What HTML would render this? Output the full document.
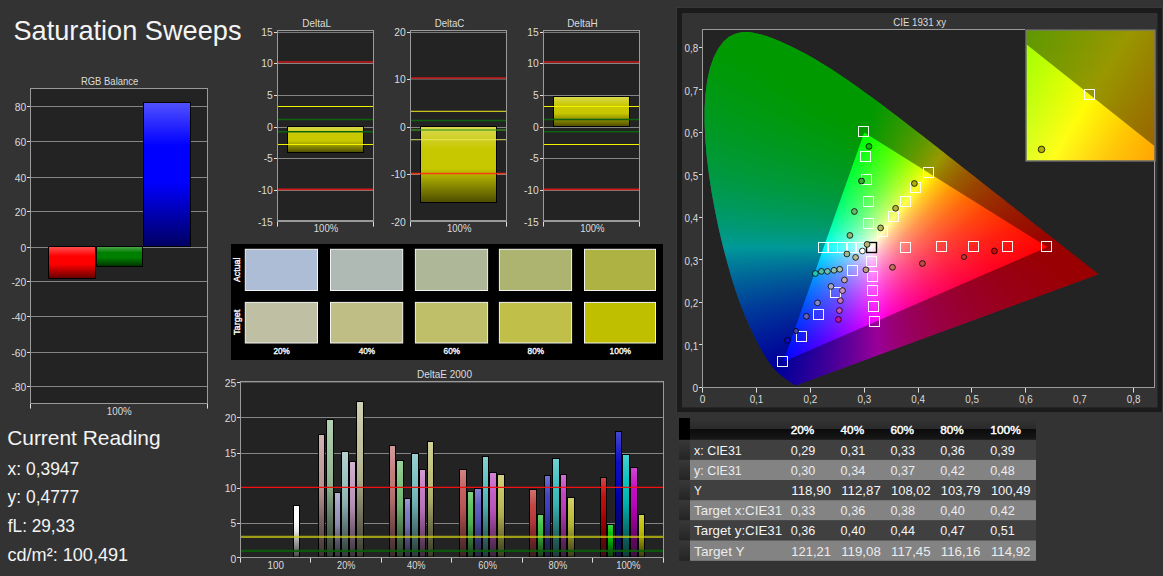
<!DOCTYPE html><html><head><meta charset="utf-8"><title>Saturation Sweeps</title><style>html,body{margin:0;padding:0;background:#333333;overflow:hidden}svg{display:block}text{white-space:pre}</style></head><body><svg width="1163" height="576" viewBox="0 0 1163 576" font-family='"Liberation Sans", sans-serif'><defs><linearGradient id="sh" x1="0" y1="0" x2="0" y2="1"><stop offset="0" stop-color="#fff" stop-opacity=".32"/><stop offset=".3" stop-color="#fff" stop-opacity="0"/><stop offset=".55" stop-color="#000" stop-opacity="0"/><stop offset="1" stop-color="#000" stop-opacity=".62"/></linearGradient><linearGradient id="sh2" x1="0" y1="0" x2="0" y2="1"><stop offset="0" stop-color="#fff" stop-opacity=".28"/><stop offset=".25" stop-color="#fff" stop-opacity=".05"/><stop offset=".5" stop-color="#000" stop-opacity=".1"/><stop offset="1" stop-color="#181818" stop-opacity=".8"/></linearGradient><linearGradient id="c0" gradientUnits="userSpaceOnUse" x1="733.0" x2="761.0" y1="0" y2="0"><stop offset="0" stop-color="#0f0"/><stop offset="1" stop-color="#0f0"/></linearGradient><linearGradient id="c1" gradientUnits="userSpaceOnUse" x1="729.0" x2="768.0" y1="0" y2="0"><stop offset="0" stop-color="#0f0"/><stop offset="1" stop-color="#0f0"/></linearGradient><linearGradient id="c2" gradientUnits="userSpaceOnUse" x1="726.0" x2="773.0" y1="0" y2="0"><stop offset="0" stop-color="#0f0"/><stop offset="1" stop-color="#0f0"/></linearGradient><linearGradient id="c3" gradientUnits="userSpaceOnUse" x1="724.0" x2="778.0" y1="0" y2="0"><stop offset="0" stop-color="#0f0"/><stop offset="1" stop-color="#0f0"/></linearGradient><linearGradient id="c4" gradientUnits="userSpaceOnUse" x1="722.0" x2="783.0" y1="0" y2="0"><stop offset="0" stop-color="#0f0"/><stop offset="1" stop-color="#0f0"/></linearGradient><linearGradient id="c5" gradientUnits="userSpaceOnUse" x1="720.0" x2="787.0" y1="0" y2="0"><stop offset="0" stop-color="#0f0"/><stop offset="1" stop-color="#0f0"/></linearGradient><linearGradient id="c6" gradientUnits="userSpaceOnUse" x1="719.0" x2="792.0" y1="0" y2="0"><stop offset="0" stop-color="#00ff02"/><stop offset="1" stop-color="#0f0"/></linearGradient><linearGradient id="c7" gradientUnits="userSpaceOnUse" x1="717.0" x2="796.0" y1="0" y2="0"><stop offset="0" stop-color="#00ff03"/><stop offset="0.5127" stop-color="#0f0"/><stop offset="1" stop-color="#0f0"/></linearGradient><linearGradient id="c8" gradientUnits="userSpaceOnUse" x1="716.0" x2="800.0" y1="0" y2="0"><stop offset="0" stop-color="#00ff05"/><stop offset="0.369" stop-color="#0f0"/><stop offset="1" stop-color="#0f0"/></linearGradient><linearGradient id="c9" gradientUnits="userSpaceOnUse" x1="715.0" x2="804.0" y1="0" y2="0"><stop offset="0" stop-color="#00ff06"/><stop offset="0.3596" stop-color="#0f0"/><stop offset="1" stop-color="#0f0"/></linearGradient><linearGradient id="c10" gradientUnits="userSpaceOnUse" x1="714.0" x2="807.0" y1="0" y2="0"><stop offset="0" stop-color="#00ff08"/><stop offset="0.3763" stop-color="#0f0"/><stop offset="1" stop-color="#0f0"/></linearGradient><linearGradient id="c11" gradientUnits="userSpaceOnUse" x1="713.0" x2="811.0" y1="0" y2="0"><stop offset="0" stop-color="#00ff09"/><stop offset="0.3878" stop-color="#0f0"/><stop offset="1" stop-color="#0f0"/></linearGradient><linearGradient id="c12" gradientUnits="userSpaceOnUse" x1="712.0" x2="814.0" y1="0" y2="0"><stop offset="0" stop-color="#00ff0a"/><stop offset="0.4069" stop-color="#0f0"/><stop offset="1" stop-color="#0f0"/></linearGradient><linearGradient id="c13" gradientUnits="userSpaceOnUse" x1="711.0" x2="818.0" y1="0" y2="0"><stop offset="0" stop-color="#00ff0c"/><stop offset="0.4252" stop-color="#0f0"/><stop offset="1" stop-color="#0f0"/></linearGradient><linearGradient id="c14" gradientUnits="userSpaceOnUse" x1="711.0" x2="821.0" y1="0" y2="0"><stop offset="0" stop-color="#00ff0d"/><stop offset="0.4364" stop-color="#0f0"/><stop offset="1" stop-color="#0f0"/></linearGradient><linearGradient id="c15" gradientUnits="userSpaceOnUse" x1="710.0" x2="825.0" y1="0" y2="0"><stop offset="0" stop-color="#00ff0e"/><stop offset="0.4522" stop-color="#0f0"/><stop offset="1" stop-color="#0f0"/></linearGradient><linearGradient id="c16" gradientUnits="userSpaceOnUse" x1="709.0" x2="828.0" y1="0" y2="0"><stop offset="0" stop-color="#00ff10"/><stop offset="0.4706" stop-color="#0f0"/><stop offset="1" stop-color="#0f0"/></linearGradient><linearGradient id="c17" gradientUnits="userSpaceOnUse" x1="708.0" x2="831.0" y1="0" y2="0"><stop offset="0" stop-color="#0f1"/><stop offset="0.4878" stop-color="#0f0"/><stop offset="1" stop-color="#0f0"/></linearGradient><linearGradient id="c18" gradientUnits="userSpaceOnUse" x1="708.0" x2="834.0" y1="0" y2="0"><stop offset="0" stop-color="#00ff12"/><stop offset="0.504" stop-color="#0f0"/><stop offset="1" stop-color="#0f0"/></linearGradient><linearGradient id="c19" gradientUnits="userSpaceOnUse" x1="708.0" x2="837.0" y1="0" y2="0"><stop offset="0" stop-color="#00ff14"/><stop offset="0.5155" stop-color="#0f0"/><stop offset="1" stop-color="#0f0"/></linearGradient><linearGradient id="c20" gradientUnits="userSpaceOnUse" x1="707.0" x2="840.0" y1="0" y2="0"><stop offset="0" stop-color="#00ff15"/><stop offset="0.5301" stop-color="#0f0"/><stop offset="1" stop-color="#0f0"/></linearGradient><linearGradient id="c21" gradientUnits="userSpaceOnUse" x1="707.0" x2="843.0" y1="0" y2="0"><stop offset="0" stop-color="#00ff16"/><stop offset="0.5404" stop-color="#0f0"/><stop offset="1" stop-color="#0f0"/></linearGradient><linearGradient id="c22" gradientUnits="userSpaceOnUse" x1="706.0" x2="846.0" y1="0" y2="0"><stop offset="0" stop-color="#00ff18"/><stop offset="0.5536" stop-color="#0f0"/><stop offset="1" stop-color="#0f0"/></linearGradient><linearGradient id="c23" gradientUnits="userSpaceOnUse" x1="706.0" x2="849.0" y1="0" y2="0"><stop offset="0" stop-color="#00ff19"/><stop offset="0.5629" stop-color="#0f0"/><stop offset="1" stop-color="#0f0"/></linearGradient><linearGradient id="c24" gradientUnits="userSpaceOnUse" x1="706.0" x2="852.0" y1="0" y2="0"><stop offset="0" stop-color="#00ff1b"/><stop offset="0.5719" stop-color="#0f0"/><stop offset="1" stop-color="#0f0"/></linearGradient><linearGradient id="c25" gradientUnits="userSpaceOnUse" x1="705.0" x2="855.0" y1="0" y2="0"><stop offset="0" stop-color="#00ff1c"/><stop offset="0.5867" stop-color="#0f0"/><stop offset="1" stop-color="#0f0"/></linearGradient><linearGradient id="c26" gradientUnits="userSpaceOnUse" x1="705.0" x2="858.0" y1="0" y2="0"><stop offset="0" stop-color="#00ff1d"/><stop offset="0.5948" stop-color="#0f0"/><stop offset="1" stop-color="#0f0"/></linearGradient><linearGradient id="c27" gradientUnits="userSpaceOnUse" x1="705.0" x2="860.0" y1="0" y2="0"><stop offset="0" stop-color="#00ff1f"/><stop offset="0.6065" stop-color="#0f0"/><stop offset="1" stop-color="#0f0"/></linearGradient><linearGradient id="c28" gradientUnits="userSpaceOnUse" x1="704.0" x2="863.0" y1="0" y2="0"><stop offset="0" stop-color="#00ff20"/><stop offset="0.6164" stop-color="#0f0"/><stop offset="1" stop-color="#0f0"/></linearGradient><linearGradient id="c29" gradientUnits="userSpaceOnUse" x1="704.0" x2="866.0" y1="0" y2="0"><stop offset="0" stop-color="#0f2"/><stop offset="0.6265" stop-color="#0f0"/><stop offset="1" stop-color="#0f0"/></linearGradient><linearGradient id="c30" gradientUnits="userSpaceOnUse" x1="704.0" x2="869.0" y1="0" y2="0"><stop offset="0" stop-color="#00ff23"/><stop offset="0.6333" stop-color="#0f0"/><stop offset="1" stop-color="#0f0"/></linearGradient><linearGradient id="c31" gradientUnits="userSpaceOnUse" x1="704.0" x2="871.0" y1="0" y2="0"><stop offset="0" stop-color="#00ff25"/><stop offset="0.6437" stop-color="#0f0"/><stop offset="1" stop-color="#0f0"/></linearGradient><linearGradient id="c32" gradientUnits="userSpaceOnUse" x1="704.0" x2="874.0" y1="0" y2="0"><stop offset="0" stop-color="#00ff26"/><stop offset="0.65" stop-color="#0f0"/><stop offset="1" stop-color="#0f0"/></linearGradient><linearGradient id="c33" gradientUnits="userSpaceOnUse" x1="704.0" x2="877.0" y1="0" y2="0"><stop offset="0" stop-color="#00ff27"/><stop offset="0.659" stop-color="#0f0"/><stop offset="1" stop-color="#02ff00"/></linearGradient><linearGradient id="c34" gradientUnits="userSpaceOnUse" x1="704.0" x2="880.0" y1="0" y2="0"><stop offset="0" stop-color="#00ff29"/><stop offset="0.6648" stop-color="#0f0"/><stop offset="0.9801" stop-color="#02ff00"/><stop offset="1" stop-color="#09ff00"/></linearGradient><linearGradient id="c35" gradientUnits="userSpaceOnUse" x1="703.0" x2="882.0" y1="0" y2="0"><stop offset="0" stop-color="#00ff2b"/><stop offset="0.676" stop-color="#0f0"/><stop offset="0.9637" stop-color="#02ff00"/><stop offset="1" stop-color="#0eff00"/></linearGradient><linearGradient id="c36" gradientUnits="userSpaceOnUse" x1="703.0" x2="885.0" y1="0" y2="0"><stop offset="0" stop-color="#00ff2c"/><stop offset="0.6841" stop-color="#0f0"/><stop offset="0.9451" stop-color="#02ff00"/><stop offset="1" stop-color="#16ff00"/></linearGradient><linearGradient id="c37" gradientUnits="userSpaceOnUse" x1="703.0" x2="888.0" y1="0" y2="0"><stop offset="0" stop-color="#00ff2e"/><stop offset="0.6892" stop-color="#0f0"/><stop offset="0.9243" stop-color="#02ff00"/><stop offset="1" stop-color="#1dff00"/></linearGradient><linearGradient id="c38" gradientUnits="userSpaceOnUse" x1="703.0" x2="890.0" y1="0" y2="0"><stop offset="0" stop-color="#00ff2f"/><stop offset="0.6979" stop-color="#0f0"/><stop offset="0.9118" stop-color="#02ff00"/><stop offset="1" stop-color="#23ff00"/></linearGradient><linearGradient id="c39" gradientUnits="userSpaceOnUse" x1="703.0" x2="893.0" y1="0" y2="0"><stop offset="0" stop-color="#00ff31"/><stop offset="0.6553" stop-color="#00ff01"/><stop offset="0.8947" stop-color="#02ff00"/><stop offset="1" stop-color="#2bff00"/></linearGradient><linearGradient id="c40" gradientUnits="userSpaceOnUse" x1="703.0" x2="896.0" y1="0" y2="0"><stop offset="0" stop-color="#00ff32"/><stop offset="0.6425" stop-color="#00ff03"/><stop offset="0.8679" stop-color="#0f0"/><stop offset="1" stop-color="#3f0"/></linearGradient><linearGradient id="c41" gradientUnits="userSpaceOnUse" x1="703.0" x2="898.0" y1="0" y2="0"><stop offset="0" stop-color="#00ff34"/><stop offset="0.6333" stop-color="#00ff05"/><stop offset="0.741" stop-color="#0f0"/><stop offset="0.8641" stop-color="#02ff00"/><stop offset="1" stop-color="#3aff00"/></linearGradient><linearGradient id="c42" gradientUnits="userSpaceOnUse" x1="703.0" x2="901.0" y1="0" y2="0"><stop offset="0" stop-color="#00ff36"/><stop offset="0.6212" stop-color="#00ff07"/><stop offset="0.7298" stop-color="#0f0"/><stop offset="0.846" stop-color="#02ff00"/><stop offset="1" stop-color="#42ff00"/></linearGradient><linearGradient id="c43" gradientUnits="userSpaceOnUse" x1="703.0" x2="903.0" y1="0" y2="0"><stop offset="0" stop-color="#00ff37"/><stop offset="0.6125" stop-color="#00ff08"/><stop offset="0.735" stop-color="#0f0"/><stop offset="0.835" stop-color="#02ff00"/><stop offset="1" stop-color="#49ff00"/></linearGradient><linearGradient id="c44" gradientUnits="userSpaceOnUse" x1="703.0" x2="906.0" y1="0" y2="0"><stop offset="0" stop-color="#00ff39"/><stop offset="0.601" stop-color="#00ff0a"/><stop offset="0.7365" stop-color="#0f0"/><stop offset="0.8202" stop-color="#03ff00"/><stop offset="1" stop-color="#53ff00"/></linearGradient><linearGradient id="c45" gradientUnits="userSpaceOnUse" x1="703.0" x2="909.0" y1="0" y2="0"><stop offset="0" stop-color="#00ff3b"/><stop offset="0.5898" stop-color="#00ff0c"/><stop offset="0.7403" stop-color="#0f0"/><stop offset="0.8034" stop-color="#02ff00"/><stop offset="1" stop-color="#5cff00"/></linearGradient><linearGradient id="c46" gradientUnits="userSpaceOnUse" x1="703.0" x2="911.0" y1="0" y2="0"><stop offset="0" stop-color="#00ff3c"/><stop offset="0.5841" stop-color="#00ff0e"/><stop offset="0.7476" stop-color="#0f0"/><stop offset="0.7933" stop-color="#02ff00"/><stop offset="1" stop-color="#64ff00"/></linearGradient><linearGradient id="c47" gradientUnits="userSpaceOnUse" x1="703.0" x2="914.0" y1="0" y2="0"><stop offset="0" stop-color="#00ff3e"/><stop offset="0.5735" stop-color="#00ff10"/><stop offset="0.7488" stop-color="#0f0"/><stop offset="0.7796" stop-color="#03ff00"/><stop offset="0.9858" stop-color="#67ff00"/><stop offset="1" stop-color="#6eff00"/></linearGradient><linearGradient id="c48" gradientUnits="userSpaceOnUse" x1="703.0" x2="916.0" y1="0" y2="0"><stop offset="0" stop-color="#00ff40"/><stop offset="0.5657" stop-color="#00ff12"/><stop offset="0.7559" stop-color="#0f0"/><stop offset="0.8028" stop-color="#12ff00"/><stop offset="1" stop-color="#76ff00"/></linearGradient><linearGradient id="c49" gradientUnits="userSpaceOnUse" x1="703.0" x2="919.0" y1="0" y2="0"><stop offset="0" stop-color="#00ff42"/><stop offset="0.5556" stop-color="#00ff14"/><stop offset="0.7523" stop-color="#02ff00"/><stop offset="0.9491" stop-color="#64ff00"/><stop offset="1" stop-color="#82ff00"/></linearGradient><linearGradient id="c50" gradientUnits="userSpaceOnUse" x1="703.0" x2="922.0" y1="0" y2="0"><stop offset="0" stop-color="#00ff43"/><stop offset="0.5457" stop-color="#00ff16"/><stop offset="0.7397" stop-color="#02ff00"/><stop offset="0.9315" stop-color="#65ff00"/><stop offset="1" stop-color="#8dff00"/></linearGradient><linearGradient id="c51" gradientUnits="userSpaceOnUse" x1="704.0" x2="924.0" y1="0" y2="0"><stop offset="0" stop-color="#00ff45"/><stop offset="0.5409" stop-color="#00ff18"/><stop offset="0.7273" stop-color="#02ff02"/><stop offset="0.9182" stop-color="#65ff00"/><stop offset="1" stop-color="#96ff00"/></linearGradient><linearGradient id="c52" gradientUnits="userSpaceOnUse" x1="704.0" x2="927.0" y1="0" y2="0"><stop offset="0" stop-color="#00ff47"/><stop offset="0.5314" stop-color="#00ff1a"/><stop offset="0.7152" stop-color="#02ff05"/><stop offset="0.7915" stop-color="#28ff00"/><stop offset="0.9664" stop-color="#8dff00"/><stop offset="1" stop-color="#a3ff00"/></linearGradient><linearGradient id="c53" gradientUnits="userSpaceOnUse" x1="704.0" x2="929.0" y1="0" y2="0"><stop offset="0" stop-color="#00ff49"/><stop offset="0.5244" stop-color="#00ff1c"/><stop offset="0.7067" stop-color="#03ff07"/><stop offset="0.7889" stop-color="#2dff00"/><stop offset="0.96" stop-color="#92ff00"/><stop offset="1" stop-color="#acff00"/></linearGradient><linearGradient id="c54" gradientUnits="userSpaceOnUse" x1="704.0" x2="932.0" y1="0" y2="0"><stop offset="0" stop-color="#00ff4b"/><stop offset="0.5154" stop-color="#00ff1e"/><stop offset="0.693" stop-color="#02ff09"/><stop offset="0.7873" stop-color="#34ff00"/><stop offset="0.9539" stop-color="#9aff00"/><stop offset="1" stop-color="#baff00"/></linearGradient><linearGradient id="c55" gradientUnits="userSpaceOnUse" x1="704.0" x2="934.0" y1="0" y2="0"><stop offset="0" stop-color="#00ff4d"/><stop offset="0.5109" stop-color="#00ff20"/><stop offset="0.6848" stop-color="#02ff0c"/><stop offset="0.7913" stop-color="#3cff00"/><stop offset="0.9522" stop-color="#a2ff00"/><stop offset="1" stop-color="#c4ff00"/></linearGradient><linearGradient id="c56" gradientUnits="userSpaceOnUse" x1="704.0" x2="937.0" y1="0" y2="0"><stop offset="0" stop-color="#00ff4f"/><stop offset="0.5021" stop-color="#00ff23"/><stop offset="0.6717" stop-color="#02ff0e"/><stop offset="0.794" stop-color="#46ff00"/><stop offset="0.9485" stop-color="#acff00"/><stop offset="1" stop-color="#d3ff00"/></linearGradient><linearGradient id="c57" gradientUnits="userSpaceOnUse" x1="704.0" x2="939.0" y1="0" y2="0"><stop offset="0" stop-color="#00ff51"/><stop offset="0.4957" stop-color="#00ff25"/><stop offset="0.6638" stop-color="#02ff11"/><stop offset="0.8" stop-color="#51ff00"/><stop offset="0.9489" stop-color="#b7ff00"/><stop offset="1" stop-color="#dfff00"/></linearGradient><linearGradient id="c58" gradientUnits="userSpaceOnUse" x1="705.0" x2="942.0" y1="0" y2="0"><stop offset="0" stop-color="#00ff53"/><stop offset="0.4895" stop-color="#00ff27"/><stop offset="0.6498" stop-color="#02ff13"/><stop offset="0.8017" stop-color="#5bff00"/><stop offset="0.9473" stop-color="#c3ff00"/><stop offset="1" stop-color="#ef0"/></linearGradient><linearGradient id="c59" gradientUnits="userSpaceOnUse" x1="705.0" x2="945.0" y1="0" y2="0"><stop offset="0" stop-color="#0f5"/><stop offset="0.4813" stop-color="#00ff29"/><stop offset="0.6396" stop-color="#02ff16"/><stop offset="0.8021" stop-color="#65ff00"/><stop offset="0.9417" stop-color="#cdff00"/><stop offset="1" stop-color="#ff0"/></linearGradient><linearGradient id="c60" gradientUnits="userSpaceOnUse" x1="705.0" x2="947.0" y1="0" y2="0"><stop offset="0" stop-color="#00ff57"/><stop offset="0.4773" stop-color="#00ff2c"/><stop offset="0.6322" stop-color="#03ff18"/><stop offset="0.7913" stop-color="#6f0"/><stop offset="0.9277" stop-color="#cdff00"/><stop offset="0.9876" stop-color="#fffd00"/><stop offset="1" stop-color="#fff300"/></linearGradient><linearGradient id="c61" gradientUnits="userSpaceOnUse" x1="705.0" x2="950.0" y1="0" y2="0"><stop offset="0" stop-color="#00ff59"/><stop offset="0.4694" stop-color="#00ff2e"/><stop offset="0.6204" stop-color="#02ff1b"/><stop offset="0.7755" stop-color="#64ff04"/><stop offset="0.8469" stop-color="#9f0"/><stop offset="0.9694" stop-color="#fffd00"/><stop offset="1" stop-color="#ffe300"/></linearGradient><linearGradient id="c62" gradientUnits="userSpaceOnUse" x1="705.0" x2="952.0" y1="0" y2="0"><stop offset="0" stop-color="#00ff5b"/><stop offset="0.4636" stop-color="#00ff31"/><stop offset="0.6134" stop-color="#02ff1e"/><stop offset="0.7672" stop-color="#66ff06"/><stop offset="0.8259" stop-color="#92ff00"/><stop offset="0.9494" stop-color="#fbff00"/><stop offset="0.9595" stop-color="#fff900"/><stop offset="1" stop-color="#ffd800"/></linearGradient><linearGradient id="c63" gradientUnits="userSpaceOnUse" x1="705.0" x2="955.0" y1="0" y2="0"><stop offset="0" stop-color="#00ff5d"/><stop offset="0.458" stop-color="#0f3"/><stop offset="0.602" stop-color="#02ff21"/><stop offset="0.752" stop-color="#65ff0a"/><stop offset="0.824" stop-color="#9cff00"/><stop offset="0.938" stop-color="#fffd00"/><stop offset="1" stop-color="#ffcb00"/></linearGradient><linearGradient id="c64" gradientUnits="userSpaceOnUse" x1="706.0" x2="957.0" y1="0" y2="0"><stop offset="0" stop-color="#00ff5f"/><stop offset="0.4542" stop-color="#00ff35"/><stop offset="0.5936" stop-color="#02ff23"/><stop offset="0.741" stop-color="#65ff0d"/><stop offset="0.8287" stop-color="#af0"/><stop offset="0.9243" stop-color="#fffd00"/><stop offset="0.992" stop-color="#ffc700"/><stop offset="1" stop-color="#ffc100"/></linearGradient><linearGradient id="c65" gradientUnits="userSpaceOnUse" x1="706.0" x2="960.0" y1="0" y2="0"><stop offset="0" stop-color="#00ff62"/><stop offset="0.4469" stop-color="#00ff38"/><stop offset="0.5827" stop-color="#01ff27"/><stop offset="0.7264" stop-color="#64ff10"/><stop offset="0.8307" stop-color="#b9ff00"/><stop offset="0.9075" stop-color="#fffd00"/><stop offset="0.9724" stop-color="#ffc700"/><stop offset="1" stop-color="#ffb600"/></linearGradient><linearGradient id="c66" gradientUnits="userSpaceOnUse" x1="706.0" x2="962.0" y1="0" y2="0"><stop offset="0" stop-color="#00ff64"/><stop offset="0.4434" stop-color="#00ff3b"/><stop offset="0.5762" stop-color="#02ff29"/><stop offset="0.7188" stop-color="#66ff13"/><stop offset="0.8359" stop-color="#c9ff00"/><stop offset="0.8945" stop-color="#fffc00"/><stop offset="0.959" stop-color="#ffc700"/><stop offset="1" stop-color="#ffad00"/></linearGradient><linearGradient id="c67" gradientUnits="userSpaceOnUse" x1="706.0" x2="965.0" y1="0" y2="0"><stop offset="0" stop-color="#00ff67"/><stop offset="0.4363" stop-color="#00ff3d"/><stop offset="0.5676" stop-color="#03ff2c"/><stop offset="0.7066" stop-color="#66ff16"/><stop offset="0.8263" stop-color="#ceff00"/><stop offset="0.8784" stop-color="#fffc00"/><stop offset="0.9421" stop-color="#ffc600"/><stop offset="1" stop-color="#ffa300"/></linearGradient><linearGradient id="c68" gradientUnits="userSpaceOnUse" x1="707.0" x2="967.0" y1="0" y2="0"><stop offset="0" stop-color="#00ff69"/><stop offset="0.4327" stop-color="#00ff40"/><stop offset="0.5577" stop-color="#02ff30"/><stop offset="0.6942" stop-color="#65ff1a"/><stop offset="0.8115" stop-color="#ccff04"/><stop offset="0.8635" stop-color="#fffe00"/><stop offset="0.925" stop-color="#ffc800"/><stop offset="1" stop-color="#ff9b00"/></linearGradient><linearGradient id="c69" gradientUnits="userSpaceOnUse" x1="707.0" x2="970.0" y1="0" y2="0"><stop offset="0" stop-color="#00ff6b"/><stop offset="0.4278" stop-color="#00ff43"/><stop offset="0.5494" stop-color="#02ff33"/><stop offset="0.6825" stop-color="#65ff1e"/><stop offset="0.7985" stop-color="#cdff07"/><stop offset="0.8479" stop-color="#fffe00"/><stop offset="0.9087" stop-color="#ffc800"/><stop offset="0.9886" stop-color="#ff9700"/><stop offset="1" stop-color="#ff9200"/></linearGradient><linearGradient id="c70" gradientUnits="userSpaceOnUse" x1="707.0" x2="973.0" y1="0" y2="0"><stop offset="0" stop-color="#00ff6e"/><stop offset="0.4211" stop-color="#00ff46"/><stop offset="0.5395" stop-color="#02ff36"/><stop offset="0.6711" stop-color="#65ff21"/><stop offset="0.7838" stop-color="#cdff0b"/><stop offset="0.8327" stop-color="#fffe00"/><stop offset="0.891" stop-color="#ffc900"/><stop offset="0.9699" stop-color="#ff9800"/><stop offset="1" stop-color="#ff8900"/></linearGradient><linearGradient id="c71" gradientUnits="userSpaceOnUse" x1="707.0" x2="975.0" y1="0" y2="0"><stop offset="0" stop-color="#00ff70"/><stop offset="0.4179" stop-color="#00ff49"/><stop offset="0.5336" stop-color="#02ff39"/><stop offset="0.6623" stop-color="#65ff25"/><stop offset="0.7724" stop-color="#ccff0f"/><stop offset="0.8209" stop-color="#fffe05"/><stop offset="0.8657" stop-color="#ffd300"/><stop offset="0.9384" stop-color="#ffa100"/><stop offset="1" stop-color="#ff8300"/></linearGradient><linearGradient id="c72" gradientUnits="userSpaceOnUse" x1="708.0" x2="978.0" y1="0" y2="0"><stop offset="0" stop-color="#00ff73"/><stop offset="0.413" stop-color="#00ff4b"/><stop offset="0.5222" stop-color="#01ff3d"/><stop offset="0.6481" stop-color="#64ff29"/><stop offset="0.7574" stop-color="#ccff14"/><stop offset="0.8056" stop-color="#fffe09"/><stop offset="0.8556" stop-color="#ffcd00"/><stop offset="0.9296" stop-color="#ff9c00"/><stop offset="1" stop-color="#ff7b00"/></linearGradient><linearGradient id="c73" gradientUnits="userSpaceOnUse" x1="708.0" x2="980.0" y1="0" y2="0"><stop offset="0" stop-color="#00ff75"/><stop offset="0.4099" stop-color="#00ff4e"/><stop offset="0.5165" stop-color="#02ff40"/><stop offset="0.6397" stop-color="#64ff2c"/><stop offset="0.7463" stop-color="#cbff18"/><stop offset="0.7941" stop-color="#fffd0d"/><stop offset="0.8493" stop-color="#ffc800"/><stop offset="0.9246" stop-color="#ff9700"/><stop offset="1" stop-color="#ff7500"/></linearGradient><linearGradient id="c74" gradientUnits="userSpaceOnUse" x1="708.0" x2="983.0" y1="0" y2="0"><stop offset="0" stop-color="#00ff78"/><stop offset="0.4055" stop-color="#00ff51"/><stop offset="0.5091" stop-color="#03ff43"/><stop offset="0.6309" stop-color="#66ff30"/><stop offset="0.7345" stop-color="#cdff1c"/><stop offset="0.78" stop-color="#fffd11"/><stop offset="0.8345" stop-color="#ffc803"/><stop offset="0.9055" stop-color="#ff9800"/><stop offset="1" stop-color="#ff6e00"/></linearGradient><linearGradient id="c75" gradientUnits="userSpaceOnUse" x1="709.0" x2="985.0" y1="0" y2="0"><stop offset="0" stop-color="#00ff7b"/><stop offset="0.4022" stop-color="#00ff54"/><stop offset="0.5" stop-color="#02ff47"/><stop offset="0.6196" stop-color="#65ff34"/><stop offset="0.7228" stop-color="#cdff20"/><stop offset="0.7681" stop-color="#fffd16"/><stop offset="0.8225" stop-color="#ffc707"/><stop offset="0.8732" stop-color="#ffa300"/><stop offset="0.9638" stop-color="#ff7600"/><stop offset="1" stop-color="#ff6800"/></linearGradient><linearGradient id="c76" gradientUnits="userSpaceOnUse" x1="709.0" x2="988.0" y1="0" y2="0"><stop offset="0" stop-color="#00ff7e"/><stop offset="0.3978" stop-color="#00ff57"/><stop offset="0.4928" stop-color="#02ff4b"/><stop offset="0.6093" stop-color="#65ff38"/><stop offset="0.7097" stop-color="#ccff25"/><stop offset="0.7545" stop-color="#fffd1b"/><stop offset="0.8065" stop-color="#ffc80b"/><stop offset="0.871" stop-color="#ff9b00"/><stop offset="0.9659" stop-color="#ff6e00"/><stop offset="1" stop-color="#ff6200"/></linearGradient><linearGradient id="c77" gradientUnits="userSpaceOnUse" x1="709.0" x2="990.0" y1="0" y2="0"><stop offset="0" stop-color="#00ff80"/><stop offset="0.395" stop-color="#00ff5b"/><stop offset="0.4858" stop-color="#02ff4f"/><stop offset="0.5996" stop-color="#64ff3d"/><stop offset="0.6993" stop-color="#ccff29"/><stop offset="0.7438" stop-color="#fffd1f"/><stop offset="0.7954" stop-color="#ffc70f"/><stop offset="0.8648" stop-color="#ff9700"/><stop offset="0.9609" stop-color="#ff6a00"/><stop offset="1" stop-color="#ff5d00"/></linearGradient><linearGradient id="c78" gradientUnits="userSpaceOnUse" x1="710.0" x2="993.0" y1="0" y2="0"><stop offset="0" stop-color="#00ff83"/><stop offset="0.3905" stop-color="#00ff5e"/><stop offset="0.477" stop-color="#02ff52"/><stop offset="0.5901" stop-color="#66ff40"/><stop offset="0.6873" stop-color="#cdff2e"/><stop offset="0.7297" stop-color="#fffd24"/><stop offset="0.7809" stop-color="#ffc713"/><stop offset="0.8498" stop-color="#ff9603"/><stop offset="0.9435" stop-color="#ff6a00"/><stop offset="1" stop-color="#ff5700"/></linearGradient><linearGradient id="c79" gradientUnits="userSpaceOnUse" x1="710.0" x2="995.0" y1="0" y2="0"><stop offset="0" stop-color="#00ff86"/><stop offset="0.3877" stop-color="#00ff61"/><stop offset="0.4702" stop-color="#01ff56"/><stop offset="0.5807" stop-color="#64ff45"/><stop offset="0.6754" stop-color="#cbff33"/><stop offset="0.7193" stop-color="#fffc29"/><stop offset="0.7702" stop-color="#ffc616"/><stop offset="0.8368" stop-color="#ff9606"/><stop offset="0.893" stop-color="#ff7900"/><stop offset="1" stop-color="#ff5300"/></linearGradient><linearGradient id="c80" gradientUnits="userSpaceOnUse" x1="710.0" x2="998.0" y1="0" y2="0"><stop offset="0" stop-color="#00ff89"/><stop offset="0.3837" stop-color="#00ff65"/><stop offset="0.4635" stop-color="#02ff5a"/><stop offset="0.5712" stop-color="#64ff49"/><stop offset="0.6649" stop-color="#cdff38"/><stop offset="0.7049" stop-color="#fffe2f"/><stop offset="0.7535" stop-color="#ffc91c"/><stop offset="0.8177" stop-color="#ff980a"/><stop offset="0.8872" stop-color="#ff7400"/><stop offset="1" stop-color="#ff4d00"/></linearGradient><linearGradient id="c81" gradientUnits="userSpaceOnUse" x1="710.0" x2="1000.0" y1="0" y2="0"><stop offset="0" stop-color="#00ff8c"/><stop offset="0.3828" stop-color="#00ff68"/><stop offset="0.4586" stop-color="#03ff5e"/><stop offset="0.5638" stop-color="#65ff4e"/><stop offset="0.6552" stop-color="#ccff3d"/><stop offset="0.6948" stop-color="#fffe34"/><stop offset="0.7431" stop-color="#ffc820"/><stop offset="0.8069" stop-color="#ff970e"/><stop offset="0.8914" stop-color="#ff6d00"/><stop offset="1" stop-color="#ff4900"/></linearGradient><linearGradient id="c82" gradientUnits="userSpaceOnUse" x1="711.0" x2="1003.0" y1="0" y2="0"><stop offset="0" stop-color="#00ff8f"/><stop offset="0.3784" stop-color="#00ff6c"/><stop offset="0.4486" stop-color="#02ff63"/><stop offset="0.5531" stop-color="#65ff53"/><stop offset="0.6421" stop-color="#ccff42"/><stop offset="0.6815" stop-color="#fffe39"/><stop offset="0.7277" stop-color="#ffc924"/><stop offset="0.7894" stop-color="#ff9812"/><stop offset="0.875" stop-color="#ff6c00"/><stop offset="0.9983" stop-color="#ff4500"/><stop offset="1" stop-color="#f40"/></linearGradient><linearGradient id="c83" gradientUnits="userSpaceOnUse" x1="711.0" x2="1006.0" y1="0" y2="0"><stop offset="0" stop-color="#00ff93"/><stop offset="0.3763" stop-color="#00ff70"/><stop offset="0.4424" stop-color="#02ff67"/><stop offset="0.5441" stop-color="#65ff57"/><stop offset="0.6322" stop-color="#cdff47"/><stop offset="0.6695" stop-color="#fffe3e"/><stop offset="0.7153" stop-color="#ffc829"/><stop offset="0.7763" stop-color="#ff9715"/><stop offset="0.861" stop-color="#ff6b03"/><stop offset="0.9695" stop-color="#ff4700"/><stop offset="1" stop-color="#ff3f00"/></linearGradient><linearGradient id="c84" gradientUnits="userSpaceOnUse" x1="712.0" x2="1008.0" y1="0" y2="0"><stop offset="0" stop-color="#00ff96"/><stop offset="0.375" stop-color="#00ff73"/><stop offset="0.4341" stop-color="#01ff6c"/><stop offset="0.5338" stop-color="#64ff5c"/><stop offset="0.6199" stop-color="#cbff4d"/><stop offset="0.6588" stop-color="#fffe44"/><stop offset="0.7044" stop-color="#ffc82d"/><stop offset="0.7652" stop-color="#ff9718"/><stop offset="0.848" stop-color="#ff6b06"/><stop offset="0.9105" stop-color="#ff5400"/><stop offset="1" stop-color="#ff3c00"/></linearGradient><linearGradient id="c85" gradientUnits="userSpaceOnUse" x1="712.0" x2="1011.0" y1="0" y2="0"><stop offset="0" stop-color="#0f9"/><stop offset="0.3712" stop-color="#0f7"/><stop offset="0.4281" stop-color="#02ff70"/><stop offset="0.5251" stop-color="#64ff61"/><stop offset="0.6104" stop-color="#cdff52"/><stop offset="0.6472" stop-color="#fffe4a"/><stop offset="0.6906" stop-color="#ffc932"/><stop offset="0.7492" stop-color="#ff981d"/><stop offset="0.8294" stop-color="#ff6c0a"/><stop offset="0.9064" stop-color="#ff5000"/><stop offset="1" stop-color="#ff3700"/></linearGradient><linearGradient id="c86" gradientUnits="userSpaceOnUse" x1="712.0" x2="1013.0" y1="0" y2="0"><stop offset="0" stop-color="#00ff9d"/><stop offset="0.3704" stop-color="#00ff7b"/><stop offset="0.4219" stop-color="#01ff75"/><stop offset="0.5183" stop-color="#64ff66"/><stop offset="0.6013" stop-color="#ccff58"/><stop offset="0.6379" stop-color="#fffd4f"/><stop offset="0.6811" stop-color="#ffc837"/><stop offset="0.7392" stop-color="#ff9720"/><stop offset="0.8189" stop-color="#ff6b0c"/><stop offset="0.9086" stop-color="#ff4b00"/><stop offset="1" stop-color="#ff3400"/></linearGradient><linearGradient id="c87" gradientUnits="userSpaceOnUse" x1="713.0" x2="1016.0" y1="0" y2="0"><stop offset="0" stop-color="#00ffa0"/><stop offset="0.368" stop-color="#00ff7f"/><stop offset="0.4142" stop-color="#02ff79"/><stop offset="0.5083" stop-color="#65ff6c"/><stop offset="0.5891" stop-color="#ccff5d"/><stop offset="0.6254" stop-color="#fffd55"/><stop offset="0.6683" stop-color="#ffc73c"/><stop offset="0.7244" stop-color="#ff9725"/><stop offset="0.802" stop-color="#ff6b10"/><stop offset="0.9076" stop-color="#ff4600"/><stop offset="1" stop-color="#ff3000"/></linearGradient><linearGradient id="c88" gradientUnits="userSpaceOnUse" x1="713.0" x2="1018.0" y1="0" y2="0"><stop offset="0" stop-color="#00ffa4"/><stop offset="0.3689" stop-color="#00ff83"/><stop offset="0.4098" stop-color="#03ff7e"/><stop offset="0.5016" stop-color="#65ff71"/><stop offset="0.582" stop-color="#ceff63"/><stop offset="0.6164" stop-color="#fffd5c"/><stop offset="0.6574" stop-color="#ffc841"/><stop offset="0.7131" stop-color="#ff9729"/><stop offset="0.7902" stop-color="#ff6b13"/><stop offset="0.9" stop-color="#f40"/><stop offset="1" stop-color="#ff2d00"/></linearGradient><linearGradient id="c89" gradientUnits="userSpaceOnUse" x1="713.0" x2="1021.0" y1="0" y2="0"><stop offset="0" stop-color="#00ffa7"/><stop offset="0.3669" stop-color="#0f8"/><stop offset="0.4026" stop-color="#02ff83"/><stop offset="0.4935" stop-color="#65ff77"/><stop offset="0.5714" stop-color="#cdff69"/><stop offset="0.6055" stop-color="#fffd62"/><stop offset="0.6461" stop-color="#ffc846"/><stop offset="0.6997" stop-color="#ff972d"/><stop offset="0.7744" stop-color="#ff6b17"/><stop offset="0.8815" stop-color="#ff4402"/><stop offset="1" stop-color="#ff2900"/></linearGradient><linearGradient id="c90" gradientUnits="userSpaceOnUse" x1="714.0" x2="1023.0" y1="0" y2="0"><stop offset="0" stop-color="#00ffab"/><stop offset="0.3673" stop-color="#00ff8c"/><stop offset="0.3964" stop-color="#02ff89"/><stop offset="0.4854" stop-color="#66ff7c"/><stop offset="0.5615" stop-color="#cdff70"/><stop offset="0.5955" stop-color="#fffd68"/><stop offset="0.6359" stop-color="#ffc74b"/><stop offset="0.6893" stop-color="#ff9631"/><stop offset="0.7638" stop-color="#ff6a1a"/><stop offset="0.8706" stop-color="#ff4305"/><stop offset="0.9401" stop-color="#ff3200"/><stop offset="1" stop-color="#ff2600"/></linearGradient><linearGradient id="c91" gradientUnits="userSpaceOnUse" x1="714.0" x2="1026.0" y1="0" y2="0"><stop offset="0" stop-color="#00ffaf"/><stop offset="0.3654" stop-color="#00ff91"/><stop offset="0.3894" stop-color="#01ff8e"/><stop offset="0.476" stop-color="#64ff82"/><stop offset="0.5513" stop-color="#ccff76"/><stop offset="0.5833" stop-color="#ffff70"/><stop offset="0.6218" stop-color="#ffca52"/><stop offset="0.6731" stop-color="#ff9937"/><stop offset="0.7436" stop-color="#ff6d1f"/><stop offset="0.8446" stop-color="#ff4609"/><stop offset="0.9263" stop-color="#ff3100"/><stop offset="1" stop-color="#f20"/></linearGradient><linearGradient id="c92" gradientUnits="userSpaceOnUse" x1="715.0" x2="1028.0" y1="0" y2="0"><stop offset="0" stop-color="#00ffb3"/><stop offset="0.3674" stop-color="#00ff95"/><stop offset="0.3834" stop-color="#02ff93"/><stop offset="0.4681" stop-color="#64ff88"/><stop offset="0.5415" stop-color="#ccff7d"/><stop offset="0.5735" stop-color="#ff7"/><stop offset="0.6118" stop-color="#ffc958"/><stop offset="0.6629" stop-color="#ff983c"/><stop offset="0.7332" stop-color="#ff6c22"/><stop offset="0.8339" stop-color="#ff450b"/><stop offset="0.9297" stop-color="#ff2c00"/><stop offset="1" stop-color="#ff2000"/></linearGradient><linearGradient id="c93" gradientUnits="userSpaceOnUse" x1="715.0" x2="1031.0" y1="0" y2="0"><stop offset="0" stop-color="#00ffb7"/><stop offset="0.3671" stop-color="#00ff9a"/><stop offset="0.3782" stop-color="#03ff99"/><stop offset="0.4604" stop-color="#65ff8f"/><stop offset="0.5316" stop-color="#cbff84"/><stop offset="0.5633" stop-color="#ffff7e"/><stop offset="0.5997" stop-color="#ffca5e"/><stop offset="0.6487" stop-color="#ff9941"/><stop offset="0.7168" stop-color="#ff6d27"/><stop offset="0.8133" stop-color="#ff460f"/><stop offset="0.9288" stop-color="#ff2900"/><stop offset="1" stop-color="#ff1c00"/></linearGradient><linearGradient id="c94" gradientUnits="userSpaceOnUse" x1="715.0" x2="1033.0" y1="0" y2="0"><stop offset="0" stop-color="#0fb"/><stop offset="0.3695" stop-color="#00ff9f"/><stop offset="0.4371" stop-color="#4eff97"/><stop offset="0.5094" stop-color="#b4ff8d"/><stop offset="0.555" stop-color="#fffe85"/><stop offset="0.5912" stop-color="#ffc964"/><stop offset="0.6399" stop-color="#ff9846"/><stop offset="0.7075" stop-color="#ff6c2a"/><stop offset="0.8035" stop-color="#ff4511"/><stop offset="0.9308" stop-color="#ff2500"/><stop offset="1" stop-color="#ff1a00"/></linearGradient><linearGradient id="c95" gradientUnits="userSpaceOnUse" x1="716.0" x2="1036.0" y1="0" y2="0"><stop offset="0" stop-color="#00ffbf"/><stop offset="0.3641" stop-color="#01ffa5"/><stop offset="0.4437" stop-color="#63ff9c"/><stop offset="0.5125" stop-color="#caff92"/><stop offset="0.5437" stop-color="#fffe8d"/><stop offset="0.5797" stop-color="#ffc96a"/><stop offset="0.6281" stop-color="#ff974a"/><stop offset="0.6937" stop-color="#ff6c2e"/><stop offset="0.7891" stop-color="#ff4414"/><stop offset="0.9297" stop-color="#f20"/><stop offset="1" stop-color="#ff1700"/></linearGradient><linearGradient id="c96" gradientUnits="userSpaceOnUse" x1="716.0" x2="1039.0" y1="0" y2="0"><stop offset="0" stop-color="#00ffc4"/><stop offset="0.3591" stop-color="#02ffab"/><stop offset="0.4365" stop-color="#63ffa2"/><stop offset="0.5046" stop-color="#cf9"/><stop offset="0.5341" stop-color="#fffe94"/><stop offset="0.5697" stop-color="#ffc870"/><stop offset="0.6161" stop-color="#ff974f"/><stop offset="0.6811" stop-color="#ff6b32"/><stop offset="0.774" stop-color="#ff4417"/><stop offset="0.9133" stop-color="#f20"/><stop offset="1" stop-color="#ff1400"/></linearGradient><linearGradient id="c97" gradientUnits="userSpaceOnUse" x1="717.0" x2="1041.0" y1="0" y2="0"><stop offset="0" stop-color="#00ffc8"/><stop offset="0.3534" stop-color="#02ffb1"/><stop offset="0.4306" stop-color="#66ffa9"/><stop offset="0.4969" stop-color="#ceffa1"/><stop offset="0.5247" stop-color="#fffe9c"/><stop offset="0.5586" stop-color="#ffc977"/><stop offset="0.6049" stop-color="#ff9855"/><stop offset="0.6682" stop-color="#ff6c36"/><stop offset="0.7593" stop-color="#ff441b"/><stop offset="0.8951" stop-color="#ff2203"/><stop offset="1" stop-color="#f10"/></linearGradient><linearGradient id="c98" gradientUnits="userSpaceOnUse" x1="717.0" x2="1044.0" y1="0" y2="0"><stop offset="0" stop-color="#00ffcd"/><stop offset="0.3471" stop-color="#01ffb8"/><stop offset="0.422" stop-color="#64ffb0"/><stop offset="0.4862" stop-color="#cbffa9"/><stop offset="0.5153" stop-color="#fffea4"/><stop offset="0.5489" stop-color="#ffc87e"/><stop offset="0.5933" stop-color="#ff985b"/><stop offset="0.6544" stop-color="#ff6c3b"/><stop offset="0.7431" stop-color="#ff451f"/><stop offset="0.8761" stop-color="#ff2206"/><stop offset="0.9557" stop-color="#ff1500"/><stop offset="1" stop-color="#ff0f00"/></linearGradient><linearGradient id="c99" gradientUnits="userSpaceOnUse" x1="718.0" x2="1046.0" y1="0" y2="0"><stop offset="0" stop-color="#00ffd1"/><stop offset="0.3415" stop-color="#02ffbe"/><stop offset="0.4146" stop-color="#65ffb8"/><stop offset="0.4787" stop-color="#cdffb1"/><stop offset="0.5061" stop-color="#fffdac"/><stop offset="0.5396" stop-color="#ffc784"/><stop offset="0.5838" stop-color="#ff9760"/><stop offset="0.6448" stop-color="#ff6b3f"/><stop offset="0.7317" stop-color="#f42"/><stop offset="0.8628" stop-color="#ff2208"/><stop offset="0.9527" stop-color="#ff1300"/><stop offset="1" stop-color="#ff0c00"/></linearGradient><linearGradient id="c100" gradientUnits="userSpaceOnUse" x1="718.0" x2="1049.0" y1="0" y2="0"><stop offset="0" stop-color="#00ffd6"/><stop offset="0.3353" stop-color="#01ffc5"/><stop offset="0.4063" stop-color="#63ffbf"/><stop offset="0.4683" stop-color="#caffb9"/><stop offset="0.497" stop-color="#fffdb5"/><stop offset="0.5287" stop-color="#ffc88c"/><stop offset="0.571" stop-color="#ff9867"/><stop offset="0.6299" stop-color="#ff6c45"/><stop offset="0.7145" stop-color="#ff4526"/><stop offset="0.8414" stop-color="#ff220c"/><stop offset="0.9502" stop-color="#ff1000"/><stop offset="1" stop-color="#ff0a00"/></linearGradient><linearGradient id="c101" gradientUnits="userSpaceOnUse" x1="719.0" x2="1051.0" y1="0" y2="0"><stop offset="0" stop-color="#00ffdb"/><stop offset="0.3298" stop-color="#02ffcc"/><stop offset="0.4006" stop-color="#65ffc7"/><stop offset="0.4608" stop-color="#ccffc2"/><stop offset="0.488" stop-color="#fffdbe"/><stop offset="0.5196" stop-color="#ffc893"/><stop offset="0.5617" stop-color="#ff976c"/><stop offset="0.6205" stop-color="#ff6b49"/><stop offset="0.7048" stop-color="#ff4329"/><stop offset="0.8313" stop-color="#ff210e"/><stop offset="0.9533" stop-color="#ff0d00"/><stop offset="1" stop-color="#ff0800"/></linearGradient><linearGradient id="c102" gradientUnits="userSpaceOnUse" x1="719.0" x2="1054.0" y1="0" y2="0"><stop offset="0" stop-color="#00ffe0"/><stop offset="0.3239" stop-color="#01ffd4"/><stop offset="0.3925" stop-color="#63ffcf"/><stop offset="0.4522" stop-color="#cbffcb"/><stop offset="0.4791" stop-color="#fffdc7"/><stop offset="0.5104" stop-color="#ffc79a"/><stop offset="0.5522" stop-color="#ff9671"/><stop offset="0.609" stop-color="#ff6a4d"/><stop offset="0.691" stop-color="#ff432d"/><stop offset="0.8149" stop-color="#ff2110"/><stop offset="0.9522" stop-color="#ff0b00"/><stop offset="1" stop-color="#ff0500"/></linearGradient><linearGradient id="c103" gradientUnits="userSpaceOnUse" x1="719.0" x2="1056.0" y1="0" y2="0"><stop offset="0" stop-color="#00ffe6"/><stop offset="0.3205" stop-color="#02ffdb"/><stop offset="0.3872" stop-color="#64ffd8"/><stop offset="0.4451" stop-color="#cbffd4"/><stop offset="0.4703" stop-color="#ffffd2"/><stop offset="0.5015" stop-color="#ffc8a3"/><stop offset="0.5415" stop-color="#ff9879"/><stop offset="0.5964" stop-color="#ff6c54"/><stop offset="0.6751" stop-color="#ff4532"/><stop offset="0.7938" stop-color="#ff2214"/><stop offset="0.951" stop-color="#ff0900"/><stop offset="1" stop-color="#ff0300"/></linearGradient><linearGradient id="c104" gradientUnits="userSpaceOnUse" x1="720.0" x2="1059.0" y1="0" y2="0"><stop offset="0" stop-color="#00ffeb"/><stop offset="0.3142" stop-color="#02ffe3"/><stop offset="0.3791" stop-color="#64ffe0"/><stop offset="0.4351" stop-color="#caffde"/><stop offset="0.4602" stop-color="#ffffdc"/><stop offset="0.4897" stop-color="#ffc9ac"/><stop offset="0.528" stop-color="#ff9982"/><stop offset="0.5811" stop-color="#ff6d5a"/><stop offset="0.6578" stop-color="#ff4637"/><stop offset="0.7729" stop-color="#ff2318"/><stop offset="0.9454" stop-color="#ff0700"/><stop offset="1" stop-color="#ff0100"/></linearGradient><linearGradient id="c105" gradientUnits="userSpaceOnUse" x1="720.0" x2="1062.0" y1="0" y2="0"><stop offset="0" stop-color="#00fff1"/><stop offset="0.3085" stop-color="#01ffeb"/><stop offset="0.3728" stop-color="#64ffe9"/><stop offset="0.4284" stop-color="#cdffe7"/><stop offset="0.4518" stop-color="#ffffe6"/><stop offset="0.481" stop-color="#ffc8b4"/><stop offset="0.519" stop-color="#ff9887"/><stop offset="0.5716" stop-color="#ff6c5f"/><stop offset="0.6477" stop-color="#ff443a"/><stop offset="0.7617" stop-color="#ff221b"/><stop offset="0.9415" stop-color="#ff0500"/><stop offset="1" stop-color="#f00"/></linearGradient><linearGradient id="c106" gradientUnits="userSpaceOnUse" x1="721.0" x2="1064.0" y1="0" y2="0"><stop offset="0" stop-color="#00fff6"/><stop offset="0.3032" stop-color="#02fff3"/><stop offset="0.3659" stop-color="#65fff2"/><stop offset="0.4198" stop-color="#ccfff1"/><stop offset="0.4431" stop-color="#fffff1"/><stop offset="0.4708" stop-color="#ffcabe"/><stop offset="0.5073" stop-color="#ff9a90"/><stop offset="0.5583" stop-color="#ff6e66"/><stop offset="0.6312" stop-color="#ff4640"/><stop offset="0.7405" stop-color="#ff231f"/><stop offset="0.9155" stop-color="#ff0603"/><stop offset="1" stop-color="#f00"/></linearGradient><linearGradient id="c107" gradientUnits="userSpaceOnUse" x1="721.0" x2="1067.0" y1="0" y2="0"><stop offset="0" stop-color="#00fffc"/><stop offset="0.2977" stop-color="#01fffc"/><stop offset="0.3584" stop-color="#63fffc"/><stop offset="0.4104" stop-color="#c8fffc"/><stop offset="0.435" stop-color="#fffffc"/><stop offset="0.4624" stop-color="#ffc9c6"/><stop offset="0.4986" stop-color="#ff9897"/><stop offset="0.5491" stop-color="#ff6c6b"/><stop offset="0.6214" stop-color="#ff4544"/><stop offset="0.7298" stop-color="#f22"/><stop offset="0.9032" stop-color="#ff0504"/><stop offset="0.9928" stop-color="#f00"/><stop offset="1" stop-color="#f00"/></linearGradient><linearGradient id="c108" gradientUnits="userSpaceOnUse" x1="722.0" x2="1069.0" y1="0" y2="0"><stop offset="0" stop-color="#00fcff"/><stop offset="0.2925" stop-color="#02f9ff"/><stop offset="0.3545" stop-color="#66f8ff"/><stop offset="0.4078" stop-color="#cef7ff"/><stop offset="0.4308" stop-color="#fff4fc"/><stop offset="0.4582" stop-color="#ffc1c8"/><stop offset="0.4957" stop-color="#ff9197"/><stop offset="0.5461" stop-color="#ff676b"/><stop offset="0.6196" stop-color="#ff4044"/><stop offset="0.7291" stop-color="#ff1f22"/><stop offset="0.9063" stop-color="#ff0204"/><stop offset="0.9971" stop-color="#f00"/><stop offset="1" stop-color="#f00"/></linearGradient><linearGradient id="c109" gradientUnits="userSpaceOnUse" x1="722.0" x2="1072.0" y1="0" y2="0"><stop offset="0" stop-color="#00f6ff"/><stop offset="0.2871" stop-color="#00f1ff"/><stop offset="0.3486" stop-color="#62efff"/><stop offset="0.4029" stop-color="#cbedff"/><stop offset="0.4271" stop-color="#ffeafd"/><stop offset="0.4543" stop-color="#ffb9c9"/><stop offset="0.4914" stop-color="#ff8b98"/><stop offset="0.5429" stop-color="#ff616c"/><stop offset="0.6157" stop-color="#ff3c45"/><stop offset="0.7257" stop-color="#ff1c23"/><stop offset="0.9029" stop-color="#ff0005"/><stop offset="0.9929" stop-color="#f00"/><stop offset="1" stop-color="#f00"/></linearGradient><linearGradient id="c110" gradientUnits="userSpaceOnUse" x1="723.0" x2="1074.0" y1="0" y2="0"><stop offset="0" stop-color="#00f0ff"/><stop offset="0.2821" stop-color="#01e8ff"/><stop offset="0.3447" stop-color="#64e6ff"/><stop offset="0.3989" stop-color="#cbe3ff"/><stop offset="0.4231" stop-color="#ffe1fe"/><stop offset="0.4516" stop-color="#ffb0c8"/><stop offset="0.4886" stop-color="#ff8498"/><stop offset="0.5399" stop-color="#ff5c6d"/><stop offset="0.614" stop-color="#ff3845"/><stop offset="0.7251" stop-color="#ff1923"/><stop offset="0.8932" stop-color="#ff0006"/><stop offset="0.9872" stop-color="#f00"/><stop offset="1" stop-color="#f00"/></linearGradient><linearGradient id="c111" gradientUnits="userSpaceOnUse" x1="723.0" x2="1077.0" y1="0" y2="0"><stop offset="0" stop-color="#00eaff"/><stop offset="0.2782" stop-color="#02e0ff"/><stop offset="0.3418" stop-color="#65ddff"/><stop offset="0.3969" stop-color="#ced9ff"/><stop offset="0.4195" stop-color="#ffd7ff"/><stop offset="0.4477" stop-color="#ffa8c9"/><stop offset="0.4859" stop-color="#ff7d98"/><stop offset="0.5381" stop-color="#ff566c"/><stop offset="0.613" stop-color="#ff3445"/><stop offset="0.726" stop-color="#ff1522"/><stop offset="0.8785" stop-color="#ff0008"/><stop offset="0.9831" stop-color="#f00"/><stop offset="1" stop-color="#f00"/></linearGradient><linearGradient id="c112" gradientUnits="userSpaceOnUse" x1="724.0" x2="1079.0" y1="0" y2="0"><stop offset="0" stop-color="#00e4ff"/><stop offset="0.2718" stop-color="#01d9ff"/><stop offset="0.3366" stop-color="#65d4ff"/><stop offset="0.3915" stop-color="#cbd0ff"/><stop offset="0.4169" stop-color="#ffcbfc"/><stop offset="0.4465" stop-color="#ff9dc6"/><stop offset="0.4859" stop-color="#ff7495"/><stop offset="0.5394" stop-color="#ff4f6a"/><stop offset="0.6169" stop-color="#ff2e43"/><stop offset="0.7338" stop-color="#ff1121"/><stop offset="0.8648" stop-color="#ff000a"/><stop offset="0.9831" stop-color="#f00"/><stop offset="1" stop-color="#f00"/></linearGradient><linearGradient id="c113" gradientUnits="userSpaceOnUse" x1="725.0" x2="1082.0" y1="0" y2="0"><stop offset="0" stop-color="#00deff"/><stop offset="0.2661" stop-color="#02d1ff"/><stop offset="0.3305" stop-color="#64ccff"/><stop offset="0.3866" stop-color="#cbc7ff"/><stop offset="0.4118" stop-color="#ffc3fd"/><stop offset="0.4412" stop-color="#ff97c8"/><stop offset="0.4804" stop-color="#ff6f97"/><stop offset="0.535" stop-color="#ff4a6b"/><stop offset="0.612" stop-color="#ff2b44"/><stop offset="0.7283" stop-color="#ff0f22"/><stop offset="0.8459" stop-color="#ff000d"/><stop offset="0.9818" stop-color="#f00"/><stop offset="1" stop-color="#f00"/></linearGradient><linearGradient id="c114" gradientUnits="userSpaceOnUse" x1="725.0" x2="1084.0" y1="0" y2="0"><stop offset="0" stop-color="#00d9ff"/><stop offset="0.2632" stop-color="#02caff"/><stop offset="0.3287" stop-color="#65c4ff"/><stop offset="0.3858" stop-color="#cebeff"/><stop offset="0.4095" stop-color="#ffbafe"/><stop offset="0.4387" stop-color="#ff90c9"/><stop offset="0.4777" stop-color="#ff6a98"/><stop offset="0.532" stop-color="#ff476c"/><stop offset="0.61" stop-color="#ff2745"/><stop offset="0.727" stop-color="#ff0c22"/><stop offset="0.8301" stop-color="#ff0010"/><stop offset="0.9833" stop-color="#f00"/><stop offset="1" stop-color="#f00"/></linearGradient><linearGradient id="c115" gradientUnits="userSpaceOnUse" x1="726.0" x2="1087.0" y1="0" y2="0"><stop offset="0" stop-color="#00d3ff"/><stop offset="0.2562" stop-color="#01c3ff"/><stop offset="0.3227" stop-color="#65bcff"/><stop offset="0.3795" stop-color="#ccb5ff"/><stop offset="0.4044" stop-color="#ffb2ff"/><stop offset="0.4335" stop-color="#ff8aca"/><stop offset="0.4723" stop-color="#ff659a"/><stop offset="0.5263" stop-color="#ff436d"/><stop offset="0.6039" stop-color="#ff2546"/><stop offset="0.7202" stop-color="#ff0a23"/><stop offset="0.8116" stop-color="#ff0012"/><stop offset="0.982" stop-color="#f00"/><stop offset="1" stop-color="#f00"/></linearGradient><linearGradient id="c116" gradientUnits="userSpaceOnUse" x1="726.0" x2="1089.0" y1="0" y2="0"><stop offset="0" stop-color="#00ceff"/><stop offset="0.2534" stop-color="#02bcff"/><stop offset="0.3209" stop-color="#66b5ff"/><stop offset="0.3788" stop-color="#ceadff"/><stop offset="0.4036" stop-color="#ffa7fc"/><stop offset="0.4339" stop-color="#ff80c7"/><stop offset="0.4738" stop-color="#ff5d97"/><stop offset="0.5289" stop-color="#ff3d6b"/><stop offset="0.6088" stop-color="#ff2044"/><stop offset="0.7287" stop-color="#ff0622"/><stop offset="0.8003" stop-color="#ff0014"/><stop offset="0.9821" stop-color="#f00"/><stop offset="1" stop-color="#f00"/></linearGradient><linearGradient id="c117" gradientUnits="userSpaceOnUse" x1="727.0" x2="1092.0" y1="0" y2="0"><stop offset="0" stop-color="#00c9ff"/><stop offset="0.2466" stop-color="#01b5ff"/><stop offset="0.3137" stop-color="#63adff"/><stop offset="0.3726" stop-color="#cca5ff"/><stop offset="0.3986" stop-color="#ffa0fd"/><stop offset="0.4288" stop-color="#ff7ac8"/><stop offset="0.4699" stop-color="#ff5797"/><stop offset="0.526" stop-color="#ff386b"/><stop offset="0.6068" stop-color="#ff1c44"/><stop offset="0.7288" stop-color="#ff0321"/><stop offset="0.8219" stop-color="#f01"/><stop offset="0.9877" stop-color="#f00"/><stop offset="1" stop-color="#f00"/></linearGradient><linearGradient id="c118" gradientUnits="userSpaceOnUse" x1="727.0" x2="1095.0" y1="0" y2="0"><stop offset="0" stop-color="#00c4ff"/><stop offset="0.2432" stop-color="#02afff"/><stop offset="0.3111" stop-color="#65a6ff"/><stop offset="0.3696" stop-color="#cc9dff"/><stop offset="0.3954" stop-color="#ff98fe"/><stop offset="0.4253" stop-color="#ff74c9"/><stop offset="0.466" stop-color="#ff5298"/><stop offset="0.5217" stop-color="#ff346c"/><stop offset="0.6019" stop-color="#ff1945"/><stop offset="0.7228" stop-color="#ff0222"/><stop offset="0.9158" stop-color="#ff0005"/><stop offset="1" stop-color="#f00"/></linearGradient><linearGradient id="c119" gradientUnits="userSpaceOnUse" x1="728.0" x2="1097.0" y1="0" y2="0"><stop offset="0" stop-color="#00beff"/><stop offset="0.2385" stop-color="#02a8ff"/><stop offset="0.3076" stop-color="#669fff"/><stop offset="0.3672" stop-color="#cf95ff"/><stop offset="0.3916" stop-color="#ff91ff"/><stop offset="0.4228" stop-color="#ff6dc8"/><stop offset="0.4634" stop-color="#ff4d98"/><stop offset="0.5203" stop-color="#ff306c"/><stop offset="0.6016" stop-color="#ff1645"/><stop offset="0.7236" stop-color="#f02"/><stop offset="0.9201" stop-color="#ff0005"/><stop offset="1" stop-color="#f00"/></linearGradient><linearGradient id="c120" gradientUnits="userSpaceOnUse" x1="728.0" x2="1100.0" y1="0" y2="0"><stop offset="0" stop-color="#00b9ff"/><stop offset="0.2339" stop-color="#01a2ff"/><stop offset="0.3038" stop-color="#6599ff"/><stop offset="0.3629" stop-color="#cc8eff"/><stop offset="0.3898" stop-color="#ff88fc"/><stop offset="0.4207" stop-color="#ff66c8"/><stop offset="0.4624" stop-color="#ff4797"/><stop offset="0.5202" stop-color="#ff2b6b"/><stop offset="0.6022" stop-color="#ff1244"/><stop offset="0.7124" stop-color="#ff0025"/><stop offset="0.9032" stop-color="#ff0007"/><stop offset="1" stop-color="#f00"/></linearGradient><linearGradient id="c121" gradientUnits="userSpaceOnUse" x1="729.0" x2="1100.0" y1="0" y2="0"><stop offset="0" stop-color="#00b4ff"/><stop offset="0.2305" stop-color="#029dff"/><stop offset="0.3005" stop-color="#6592ff"/><stop offset="0.3612" stop-color="#cc87ff"/><stop offset="0.3881" stop-color="#ff81fd"/><stop offset="0.4191" stop-color="#ff60c9"/><stop offset="0.4609" stop-color="#ff4398"/><stop offset="0.5189" stop-color="#ff286c"/><stop offset="0.6024" stop-color="#ff0f45"/><stop offset="0.7008" stop-color="#ff0028"/><stop offset="0.8841" stop-color="#ff000a"/><stop offset="1" stop-color="#f00"/></linearGradient><linearGradient id="c122" gradientUnits="userSpaceOnUse" x1="730.0" x2="1095.0" y1="0" y2="0"><stop offset="0" stop-color="#00afff"/><stop offset="0.2288" stop-color="#0197ff"/><stop offset="0.3014" stop-color="#648cff"/><stop offset="0.3644" stop-color="#cc80ff"/><stop offset="0.3918" stop-color="#ff7afe"/><stop offset="0.4247" stop-color="#ff5ac8"/><stop offset="0.4685" stop-color="#ff3d97"/><stop offset="0.5288" stop-color="#ff236b"/><stop offset="0.6151" stop-color="#ff0c44"/><stop offset="0.6986" stop-color="#ff002c"/><stop offset="0.8781" stop-color="#ff000d"/><stop offset="1" stop-color="#f00"/></linearGradient><linearGradient id="c123" gradientUnits="userSpaceOnUse" x1="730.0" x2="1090.0" y1="0" y2="0"><stop offset="0" stop-color="#0af"/><stop offset="0.2306" stop-color="#0291ff"/><stop offset="0.3056" stop-color="#6586ff"/><stop offset="0.3694" stop-color="#cc79ff"/><stop offset="0.3972" stop-color="#ff73fe"/><stop offset="0.4306" stop-color="#ff55c9"/><stop offset="0.475" stop-color="#ff3998"/><stop offset="0.5361" stop-color="#ff206c"/><stop offset="0.6236" stop-color="#ff0945"/><stop offset="0.6972" stop-color="#ff0030"/><stop offset="0.8722" stop-color="#ff0010"/><stop offset="1" stop-color="#ff0002"/></linearGradient><linearGradient id="c124" gradientUnits="userSpaceOnUse" x1="731.0" x2="1084.0" y1="0" y2="0"><stop offset="0" stop-color="#00a6ff"/><stop offset="0.2309" stop-color="#028cff"/><stop offset="0.3074" stop-color="#6580ff"/><stop offset="0.3739" stop-color="#cc73ff"/><stop offset="0.4037" stop-color="#ff6bfc"/><stop offset="0.4391" stop-color="#ff4ec6"/><stop offset="0.4858" stop-color="#ff3396"/><stop offset="0.551" stop-color="#ff1b6a"/><stop offset="0.6445" stop-color="#ff0543"/><stop offset="0.704" stop-color="#ff0032"/><stop offset="0.8796" stop-color="#ff0012"/><stop offset="1" stop-color="#ff0004"/></linearGradient><linearGradient id="c125" gradientUnits="userSpaceOnUse" x1="731.0" x2="1079.0" y1="0" y2="0"><stop offset="0" stop-color="#00a1ff"/><stop offset="0.2313" stop-color="#0187ff"/><stop offset="0.3103" stop-color="#647aff"/><stop offset="0.3793" stop-color="#cc6cff"/><stop offset="0.4095" stop-color="#ff65fd"/><stop offset="0.4454" stop-color="#ff49c7"/><stop offset="0.4928" stop-color="#ff2f97"/><stop offset="0.5589" stop-color="#ff186b"/><stop offset="0.6537" stop-color="#ff0344"/><stop offset="0.7716" stop-color="#ff0026"/><stop offset="0.9842" stop-color="#ff0008"/><stop offset="1" stop-color="#ff0007"/></linearGradient><linearGradient id="c126" gradientUnits="userSpaceOnUse" x1="732.0" x2="1073.0" y1="0" y2="0"><stop offset="0" stop-color="#009cff"/><stop offset="0.2317" stop-color="#0281ff"/><stop offset="0.3138" stop-color="#6574ff"/><stop offset="0.3842" stop-color="#c6f"/><stop offset="0.415" stop-color="#ff5ffe"/><stop offset="0.4516" stop-color="#ff44c8"/><stop offset="0.5" stop-color="#ff2b98"/><stop offset="0.5674" stop-color="#ff156c"/><stop offset="0.6642" stop-color="#ff0145"/><stop offset="0.8094" stop-color="#ff0023"/><stop offset="1" stop-color="#ff0009"/></linearGradient><linearGradient id="c127" gradientUnits="userSpaceOnUse" x1="733.0" x2="1068.0" y1="0" y2="0"><stop offset="0" stop-color="#0097ff"/><stop offset="0.2313" stop-color="#037cff"/><stop offset="0.3164" stop-color="#676eff"/><stop offset="0.3896" stop-color="#cf60ff"/><stop offset="0.4194" stop-color="#ff59fe"/><stop offset="0.4567" stop-color="#ff3fc9"/><stop offset="0.5075" stop-color="#ff2798"/><stop offset="0.5776" stop-color="#ff116c"/><stop offset="0.6776" stop-color="#ff0045"/><stop offset="0.8284" stop-color="#f02"/><stop offset="1" stop-color="#ff000b"/></linearGradient><linearGradient id="c128" gradientUnits="userSpaceOnUse" x1="733.0" x2="1063.0" y1="0" y2="0"><stop offset="0" stop-color="#0093ff"/><stop offset="0.2318" stop-color="#0277ff"/><stop offset="0.3182" stop-color="#6469ff"/><stop offset="0.3939" stop-color="#cd5aff"/><stop offset="0.4273" stop-color="#ff52fc"/><stop offset="0.4667" stop-color="#ff39c7"/><stop offset="0.5197" stop-color="#ff2296"/><stop offset="0.5924" stop-color="#ff0d6a"/><stop offset="0.6758" stop-color="#ff004a"/><stop offset="0.8212" stop-color="#ff0027"/><stop offset="1" stop-color="#ff000e"/></linearGradient><linearGradient id="c129" gradientUnits="userSpaceOnUse" x1="734.0" x2="1057.0" y1="0" y2="0"><stop offset="0" stop-color="#008fff"/><stop offset="0.2322" stop-color="#0273ff"/><stop offset="0.322" stop-color="#6564ff"/><stop offset="0.3994" stop-color="#cd54ff"/><stop offset="0.4334" stop-color="#ff4cfd"/><stop offset="0.4737" stop-color="#ff34c8"/><stop offset="0.5279" stop-color="#ff1e97"/><stop offset="0.6022" stop-color="#ff0a6b"/><stop offset="0.6749" stop-color="#ff004f"/><stop offset="0.8173" stop-color="#ff002b"/><stop offset="1" stop-color="#f01"/></linearGradient><linearGradient id="c130" gradientUnits="userSpaceOnUse" x1="735.0" x2="1052.0" y1="0" y2="0"><stop offset="0" stop-color="#008aff"/><stop offset="0.2303" stop-color="#016eff"/><stop offset="0.3233" stop-color="#655fff"/><stop offset="0.4038" stop-color="#cd4fff"/><stop offset="0.4385" stop-color="#ff46fe"/><stop offset="0.4795" stop-color="#ff30c9"/><stop offset="0.5347" stop-color="#ff1b98"/><stop offset="0.6104" stop-color="#ff086d"/><stop offset="0.6735" stop-color="#ff0053"/><stop offset="0.8139" stop-color="#ff002f"/><stop offset="1" stop-color="#ff0013"/></linearGradient><linearGradient id="c131" gradientUnits="userSpaceOnUse" x1="735.0" x2="1046.0" y1="0" y2="0"><stop offset="0" stop-color="#0086ff"/><stop offset="0.2331" stop-color="#0269ff"/><stop offset="0.3296" stop-color="#665aff"/><stop offset="0.4116" stop-color="#cd49ff"/><stop offset="0.4469" stop-color="#ff41fe"/><stop offset="0.4904" stop-color="#ff2ac8"/><stop offset="0.5482" stop-color="#ff1697"/><stop offset="0.627" stop-color="#ff046c"/><stop offset="0.6897" stop-color="#ff0054"/><stop offset="0.8344" stop-color="#ff002f"/><stop offset="1" stop-color="#ff0016"/></linearGradient><linearGradient id="c132" gradientUnits="userSpaceOnUse" x1="736.0" x2="1041.0" y1="0" y2="0"><stop offset="0" stop-color="#0081ff"/><stop offset="0.2328" stop-color="#0265ff"/><stop offset="0.3311" stop-color="#6555ff"/><stop offset="0.4164" stop-color="#cd44ff"/><stop offset="0.4541" stop-color="#ff3bfc"/><stop offset="0.4984" stop-color="#ff26c8"/><stop offset="0.5574" stop-color="#ff1297"/><stop offset="0.6393" stop-color="#ff016b"/><stop offset="0.7574" stop-color="#f04"/><stop offset="0.9344" stop-color="#f02"/><stop offset="1" stop-color="#ff0019"/></linearGradient><linearGradient id="c133" gradientUnits="userSpaceOnUse" x1="737.0" x2="1035.0" y1="0" y2="0"><stop offset="0" stop-color="#007dff"/><stop offset="0.2315" stop-color="#0261ff"/><stop offset="0.3339" stop-color="#6550ff"/><stop offset="0.4228" stop-color="#cd3fff"/><stop offset="0.4614" stop-color="#ff35fd"/><stop offset="0.5084" stop-color="#ff21c7"/><stop offset="0.5705" stop-color="#ff0e96"/><stop offset="0.6544" stop-color="#ff006b"/><stop offset="0.7768" stop-color="#f04"/><stop offset="0.9614" stop-color="#ff0021"/><stop offset="1" stop-color="#ff001c"/></linearGradient><linearGradient id="c134" gradientUnits="userSpaceOnUse" x1="737.0" x2="1030.0" y1="0" y2="0"><stop offset="0" stop-color="#0079ff"/><stop offset="0.2338" stop-color="#025cff"/><stop offset="0.3396" stop-color="#664bff"/><stop offset="0.43" stop-color="#cd39ff"/><stop offset="0.4693" stop-color="#ff30fe"/><stop offset="0.5171" stop-color="#ff1dc8"/><stop offset="0.5802" stop-color="#ff0b97"/><stop offset="0.6519" stop-color="#ff0072"/><stop offset="0.7696" stop-color="#ff004a"/><stop offset="0.9454" stop-color="#ff0027"/><stop offset="1" stop-color="#ff001f"/></linearGradient><linearGradient id="c135" gradientUnits="userSpaceOnUse" x1="738.0" x2="1024.0" y1="0" y2="0"><stop offset="0" stop-color="#0075ff"/><stop offset="0.2325" stop-color="#0159ff"/><stop offset="0.3427" stop-color="#6547ff"/><stop offset="0.4371" stop-color="#cd34ff"/><stop offset="0.4773" stop-color="#ff2bfe"/><stop offset="0.5262" stop-color="#ff19c9"/><stop offset="0.5909" stop-color="#ff0898"/><stop offset="0.6503" stop-color="#ff0079"/><stop offset="0.7657" stop-color="#ff0050"/><stop offset="0.9371" stop-color="#ff002c"/><stop offset="1" stop-color="#ff0023"/></linearGradient><linearGradient id="c136" gradientUnits="userSpaceOnUse" x1="739.0" x2="1019.0" y1="0" y2="0"><stop offset="0" stop-color="#0070ff"/><stop offset="0.2321" stop-color="#0254ff"/><stop offset="0.3446" stop-color="#6543ff"/><stop offset="0.4429" stop-color="#cd30ff"/><stop offset="0.4857" stop-color="#ff26fc"/><stop offset="0.5375" stop-color="#ff14c6"/><stop offset="0.6054" stop-color="#ff0496"/><stop offset="0.6696" stop-color="#ff0076"/><stop offset="0.7911" stop-color="#ff004e"/><stop offset="0.9714" stop-color="#ff002a"/><stop offset="1" stop-color="#ff0026"/></linearGradient><linearGradient id="c137" gradientUnits="userSpaceOnUse" x1="740.0" x2="1014.0" y1="0" y2="0"><stop offset="0" stop-color="#006cff"/><stop offset="0.2318" stop-color="#0250ff"/><stop offset="0.3485" stop-color="#663eff"/><stop offset="0.4489" stop-color="#cd2bff"/><stop offset="0.4927" stop-color="#ff21fd"/><stop offset="0.5456" stop-color="#ff10c7"/><stop offset="0.6168" stop-color="#ff0096"/><stop offset="0.7135" stop-color="#ff006b"/><stop offset="0.854" stop-color="#ff0043"/><stop offset="1" stop-color="#ff002a"/></linearGradient><linearGradient id="c138" gradientUnits="userSpaceOnUse" x1="740.0" x2="1008.0" y1="0" y2="0"><stop offset="0" stop-color="#0068ff"/><stop offset="0.2332" stop-color="#024dff"/><stop offset="0.3545" stop-color="#653aff"/><stop offset="0.459" stop-color="#cd26ff"/><stop offset="0.5037" stop-color="#ff1cfe"/><stop offset="0.5578" stop-color="#ff0cc8"/><stop offset="0.6306" stop-color="#ff0097"/><stop offset="0.7313" stop-color="#ff006b"/><stop offset="0.875" stop-color="#f04"/><stop offset="1" stop-color="#ff002e"/></linearGradient><linearGradient id="c139" gradientUnits="userSpaceOnUse" x1="741.0" x2="1003.0" y1="0" y2="0"><stop offset="0" stop-color="#0064ff"/><stop offset="0.2328" stop-color="#0249ff"/><stop offset="0.3588" stop-color="#6635ff"/><stop offset="0.4676" stop-color="#cf21ff"/><stop offset="0.5115" stop-color="#ff18fe"/><stop offset="0.5668" stop-color="#ff08c9"/><stop offset="0.626" stop-color="#ff00a1"/><stop offset="0.7233" stop-color="#ff0074"/><stop offset="0.8607" stop-color="#ff004c"/><stop offset="1" stop-color="#ff0032"/></linearGradient><linearGradient id="c140" gradientUnits="userSpaceOnUse" x1="742.0" x2="997.0" y1="0" y2="0"><stop offset="0" stop-color="#0060ff"/><stop offset="0.2314" stop-color="#0145ff"/><stop offset="0.3608" stop-color="#6432ff"/><stop offset="0.4725" stop-color="#cb1dff"/><stop offset="0.5235" stop-color="#ff13fc"/><stop offset="0.5824" stop-color="#ff04c7"/><stop offset="0.6392" stop-color="#ff00a2"/><stop offset="0.7392" stop-color="#ff0075"/><stop offset="0.8804" stop-color="#ff004d"/><stop offset="1" stop-color="#ff0036"/></linearGradient><linearGradient id="c141" gradientUnits="userSpaceOnUse" x1="743.0" x2="992.0" y1="0" y2="0"><stop offset="0" stop-color="#005cff"/><stop offset="0.2309" stop-color="#0242ff"/><stop offset="0.3655" stop-color="#652eff"/><stop offset="0.4819" stop-color="#cd19ff"/><stop offset="0.5321" stop-color="#ff0efd"/><stop offset="0.5924" stop-color="#ff00c8"/><stop offset="0.6727" stop-color="#ff0097"/><stop offset="0.7851" stop-color="#ff006b"/><stop offset="0.9458" stop-color="#f04"/><stop offset="1" stop-color="#ff003a"/></linearGradient><linearGradient id="c142" gradientUnits="userSpaceOnUse" x1="744.0" x2="986.0" y1="0" y2="0"><stop offset="0" stop-color="#0058ff"/><stop offset="0.2314" stop-color="#023eff"/><stop offset="0.3719" stop-color="#662aff"/><stop offset="0.4917" stop-color="#cd14ff"/><stop offset="0.5434" stop-color="#ff0afe"/><stop offset="0.6033" stop-color="#ff00ca"/><stop offset="0.686" stop-color="#f09"/><stop offset="0.7996" stop-color="#ff006d"/><stop offset="0.9628" stop-color="#ff0046"/><stop offset="1" stop-color="#ff003f"/></linearGradient><linearGradient id="c143" gradientUnits="userSpaceOnUse" x1="745.0" x2="981.0" y1="0" y2="0"><stop offset="0" stop-color="#0054ff"/><stop offset="0.2288" stop-color="#023bff"/><stop offset="0.375" stop-color="#6626ff"/><stop offset="0.5" stop-color="#cd10ff"/><stop offset="0.553" stop-color="#ff06fe"/><stop offset="0.6017" stop-color="#ff00d4"/><stop offset="0.6822" stop-color="#ff00a3"/><stop offset="0.7924" stop-color="#ff0076"/><stop offset="0.9492" stop-color="#ff004d"/><stop offset="1" stop-color="#f04"/></linearGradient><linearGradient id="c144" gradientUnits="userSpaceOnUse" x1="745.0" x2="975.0" y1="0" y2="0"><stop offset="0" stop-color="#0051ff"/><stop offset="0.2326" stop-color="#0237ff"/><stop offset="0.3826" stop-color="#6522ff"/><stop offset="0.513" stop-color="#ce0cff"/><stop offset="0.5696" stop-color="#ff01fd"/><stop offset="0.637" stop-color="#ff00c7"/><stop offset="0.7283" stop-color="#ff0096"/><stop offset="0.8543" stop-color="#ff006a"/><stop offset="1" stop-color="#ff0049"/></linearGradient><linearGradient id="c145" gradientUnits="userSpaceOnUse" x1="746.0" x2="970.0" y1="0" y2="0"><stop offset="0" stop-color="#004dff"/><stop offset="0.2321" stop-color="#0334ff"/><stop offset="0.3884" stop-color="#661eff"/><stop offset="0.5223" stop-color="#ce08ff"/><stop offset="0.5804" stop-color="#ff00fd"/><stop offset="0.6518" stop-color="#ff00c7"/><stop offset="0.7455" stop-color="#ff0097"/><stop offset="0.875" stop-color="#ff006b"/><stop offset="1" stop-color="#ff004e"/></linearGradient><linearGradient id="c146" gradientUnits="userSpaceOnUse" x1="747.0" x2="964.0" y1="0" y2="0"><stop offset="0" stop-color="#0049ff"/><stop offset="0.2304" stop-color="#0231ff"/><stop offset="0.394" stop-color="#661bff"/><stop offset="0.5346" stop-color="#ce04ff"/><stop offset="0.5922" stop-color="#fe00ff"/><stop offset="0.6682" stop-color="#ff00c8"/><stop offset="0.7673" stop-color="#ff0097"/><stop offset="0.9032" stop-color="#ff006b"/><stop offset="1" stop-color="#f05"/></linearGradient><linearGradient id="c147" gradientUnits="userSpaceOnUse" x1="748.0" x2="959.0" y1="0" y2="0"><stop offset="0" stop-color="#0046ff"/><stop offset="0.2299" stop-color="#022eff"/><stop offset="0.3981" stop-color="#6518ff"/><stop offset="0.545" stop-color="#ce00ff"/><stop offset="0.6066" stop-color="#ff00fe"/><stop offset="0.6825" stop-color="#ff00c9"/><stop offset="0.7844" stop-color="#ff0097"/><stop offset="0.9242" stop-color="#ff006c"/><stop offset="1" stop-color="#ff005a"/></linearGradient><linearGradient id="c148" gradientUnits="userSpaceOnUse" x1="749.0" x2="954.0" y1="0" y2="0"><stop offset="0" stop-color="#0042ff"/><stop offset="0.2268" stop-color="#012bff"/><stop offset="0.4024" stop-color="#6514ff"/><stop offset="0.5537" stop-color="#c0f"/><stop offset="0.622" stop-color="#ff00fd"/><stop offset="0.7024" stop-color="#ff00c7"/><stop offset="0.8098" stop-color="#ff0096"/><stop offset="0.9585" stop-color="#ff006a"/><stop offset="1" stop-color="#ff0060"/></linearGradient><linearGradient id="c149" gradientUnits="userSpaceOnUse" x1="750.0" x2="948.0" y1="0" y2="0"><stop offset="0" stop-color="#003eff"/><stop offset="0.2273" stop-color="#0227ff"/><stop offset="0.4116" stop-color="#61f"/><stop offset="0.5455" stop-color="#bc00ff"/><stop offset="0.6389" stop-color="#ff00fd"/><stop offset="0.7222" stop-color="#ff00c7"/><stop offset="0.8333" stop-color="#ff0097"/><stop offset="0.9874" stop-color="#ff006a"/><stop offset="1" stop-color="#ff0068"/></linearGradient><linearGradient id="c150" gradientUnits="userSpaceOnUse" x1="751.0" x2="943.0" y1="0" y2="0"><stop offset="0" stop-color="#003bff"/><stop offset="0.2266" stop-color="#0224ff"/><stop offset="0.4193" stop-color="#660dff"/><stop offset="0.5339" stop-color="#ad00ff"/><stop offset="0.6536" stop-color="#ff00fd"/><stop offset="0.7396" stop-color="#ff00c8"/><stop offset="0.8542" stop-color="#ff0098"/><stop offset="1" stop-color="#ff006e"/></linearGradient><linearGradient id="c151" gradientUnits="userSpaceOnUse" x1="752.0" x2="937.0" y1="0" y2="0"><stop offset="0" stop-color="#0037ff"/><stop offset="0.2243" stop-color="#0222ff"/><stop offset="0.4243" stop-color="#650bff"/><stop offset="0.527" stop-color="#a000ff"/><stop offset="0.673" stop-color="#ff00fe"/><stop offset="0.7622" stop-color="#ff00c9"/><stop offset="0.8838" stop-color="#ff0098"/><stop offset="1" stop-color="#f07"/></linearGradient><linearGradient id="c152" gradientUnits="userSpaceOnUse" x1="753.0" x2="932.0" y1="0" y2="0"><stop offset="0" stop-color="#03f"/><stop offset="0.2235" stop-color="#021fff"/><stop offset="0.433" stop-color="#6507ff"/><stop offset="0.5168" stop-color="#9300ff"/><stop offset="0.6927" stop-color="#ff00fd"/><stop offset="0.7877" stop-color="#ff00c7"/><stop offset="0.9134" stop-color="#ff0097"/><stop offset="1" stop-color="#ff007e"/></linearGradient><linearGradient id="c153" gradientUnits="userSpaceOnUse" x1="754.0" x2="926.0" y1="0" y2="0"><stop offset="0" stop-color="#0030ff"/><stop offset="0.2209" stop-color="#011cff"/><stop offset="0.4419" stop-color="#6504ff"/><stop offset="0.5291" stop-color="#9200ff"/><stop offset="0.7093" stop-color="#fd00ff"/><stop offset="0.8256" stop-color="#ff00c3"/><stop offset="0.9622" stop-color="#ff0092"/><stop offset="1" stop-color="#f08"/></linearGradient><linearGradient id="c154" gradientUnits="userSpaceOnUse" x1="755.0" x2="921.0" y1="0" y2="0"><stop offset="0" stop-color="#002cff"/><stop offset="0.2199" stop-color="#0219ff"/><stop offset="0.4518" stop-color="#6601ff"/><stop offset="0.6506" stop-color="#ce00ff"/><stop offset="0.7349" stop-color="#ff00fd"/><stop offset="0.8404" stop-color="#ff00c7"/><stop offset="0.9789" stop-color="#ff0097"/><stop offset="1" stop-color="#ff0091"/></linearGradient><linearGradient id="c155" gradientUnits="userSpaceOnUse" x1="756.0" x2="915.0" y1="0" y2="0"><stop offset="0" stop-color="#0029ff"/><stop offset="0.2201" stop-color="#0216ff"/><stop offset="0.4623" stop-color="#6500ff"/><stop offset="0.673" stop-color="#ce00ff"/><stop offset="0.761" stop-color="#ff00fe"/><stop offset="0.8711" stop-color="#ff00c8"/><stop offset="1" stop-color="#ff009c"/></linearGradient><linearGradient id="c156" gradientUnits="userSpaceOnUse" x1="757.0" x2="910.0" y1="0" y2="0"><stop offset="0" stop-color="#0025ff"/><stop offset="0.2157" stop-color="#0214ff"/><stop offset="0.4542" stop-color="#5e00ff"/><stop offset="0.6765" stop-color="#c600ff"/><stop offset="0.7876" stop-color="#ff00fd"/><stop offset="0.902" stop-color="#ff00c7"/><stop offset="1" stop-color="#ff00a6"/></linearGradient><linearGradient id="c157" gradientUnits="userSpaceOnUse" x1="758.0" x2="905.0" y1="0" y2="0"><stop offset="0" stop-color="#02f"/><stop offset="0.2143" stop-color="#0211ff"/><stop offset="0.4354" stop-color="#5300ff"/><stop offset="0.6735" stop-color="#ba00ff"/><stop offset="0.8129" stop-color="#ff00fd"/><stop offset="0.9354" stop-color="#ff00c7"/><stop offset="1" stop-color="#ff00b1"/></linearGradient><linearGradient id="c158" gradientUnits="userSpaceOnUse" x1="759.0" x2="899.0" y1="0" y2="0"><stop offset="0" stop-color="#001fff"/><stop offset="0.2143" stop-color="#030fff"/><stop offset="0.4179" stop-color="#4800ff"/><stop offset="0.675" stop-color="#af00ff"/><stop offset="0.8464" stop-color="#ff00fd"/><stop offset="0.975" stop-color="#ff00c8"/><stop offset="1" stop-color="#ff00bf"/></linearGradient><linearGradient id="c159" gradientUnits="userSpaceOnUse" x1="760.0" x2="894.0" y1="0" y2="0"><stop offset="0" stop-color="#001bff"/><stop offset="0.209" stop-color="#020cff"/><stop offset="0.3993" stop-color="#3f00ff"/><stop offset="0.6716" stop-color="#a500ff"/><stop offset="0.8769" stop-color="#ff00fe"/><stop offset="1" stop-color="#f0c"/></linearGradient><linearGradient id="c160" gradientUnits="userSpaceOnUse" x1="761.0" x2="888.0" y1="0" y2="0"><stop offset="0" stop-color="#0018ff"/><stop offset="0.2087" stop-color="#020aff"/><stop offset="0.378" stop-color="#3500ff"/><stop offset="0.6732" stop-color="#9b00ff"/><stop offset="0.9213" stop-color="#ff00fd"/><stop offset="1" stop-color="#f0d"/></linearGradient><linearGradient id="c161" gradientUnits="userSpaceOnUse" x1="762.0" x2="883.0" y1="0" y2="0"><stop offset="0" stop-color="#0015ff"/><stop offset="0.2025" stop-color="#0207ff"/><stop offset="0.3554" stop-color="#2c00ff"/><stop offset="0.6736" stop-color="#9200ff"/><stop offset="0.9463" stop-color="#fc00ff"/><stop offset="0.9793" stop-color="#ff00f4"/><stop offset="1" stop-color="#ff00ec"/></linearGradient><linearGradient id="c162" gradientUnits="userSpaceOnUse" x1="763.0" x2="877.0" y1="0" y2="0"><stop offset="0" stop-color="#0012ff"/><stop offset="0.2018" stop-color="#0205ff"/><stop offset="0.3509" stop-color="#2900ff"/><stop offset="0.693" stop-color="#8e00ff"/><stop offset="0.9868" stop-color="#f800ff"/><stop offset="1" stop-color="#fd00ff"/></linearGradient><linearGradient id="c163" gradientUnits="userSpaceOnUse" x1="765.0" x2="872.0" y1="0" y2="0"><stop offset="0" stop-color="#000eff"/><stop offset="0.1916" stop-color="#0303ff"/><stop offset="0.5794" stop-color="#60f"/><stop offset="0.9159" stop-color="#ce00ff"/><stop offset="1" stop-color="#ec00ff"/></linearGradient><linearGradient id="c164" gradientUnits="userSpaceOnUse" x1="766.0" x2="866.0" y1="0" y2="0"><stop offset="0" stop-color="#000bff"/><stop offset="0.185" stop-color="#0200ff"/><stop offset="0.605" stop-color="#6500ff"/><stop offset="0.97" stop-color="#ce00ff"/><stop offset="1" stop-color="#d800ff"/></linearGradient><linearGradient id="c165" gradientUnits="userSpaceOnUse" x1="767.0" x2="861.0" y1="0" y2="0"><stop offset="0" stop-color="#0008ff"/><stop offset="0.1809" stop-color="#0200ff"/><stop offset="0.633" stop-color="#60f"/><stop offset="1" stop-color="#c800ff"/></linearGradient><linearGradient id="c166" gradientUnits="userSpaceOnUse" x1="769.0" x2="855.0" y1="0" y2="0"><stop offset="0" stop-color="#0004ff"/><stop offset="0.1686" stop-color="#0300ff"/><stop offset="0.6628" stop-color="#60f"/><stop offset="1" stop-color="#b600ff"/></linearGradient><linearGradient id="c167" gradientUnits="userSpaceOnUse" x1="770.0" x2="850.0" y1="0" y2="0"><stop offset="0" stop-color="#0001ff"/><stop offset="0.1562" stop-color="#0200ff"/><stop offset="0.6937" stop-color="#6500ff"/><stop offset="1" stop-color="#a800ff"/></linearGradient><linearGradient id="c168" gradientUnits="userSpaceOnUse" x1="772.0" x2="845.0" y1="0" y2="0"><stop offset="0" stop-color="#00f"/><stop offset="0.137" stop-color="#0200ff"/><stop offset="0.7329" stop-color="#60f"/><stop offset="1" stop-color="#9a00ff"/></linearGradient><linearGradient id="c169" gradientUnits="userSpaceOnUse" x1="774.0" x2="839.0" y1="0" y2="0"><stop offset="0" stop-color="#00f"/><stop offset="0.1154" stop-color="#0300ff"/><stop offset="0.7923" stop-color="#6700ff"/><stop offset="1" stop-color="#8a00ff"/></linearGradient><linearGradient id="c170" gradientUnits="userSpaceOnUse" x1="776.0" x2="834.0" y1="0" y2="0"><stop offset="0" stop-color="#00f"/><stop offset="0.0862" stop-color="#0300ff"/><stop offset="0.8448" stop-color="#6700ff"/><stop offset="1" stop-color="#7d00ff"/></linearGradient><linearGradient id="c171" gradientUnits="userSpaceOnUse" x1="778.0" x2="828.0" y1="0" y2="0"><stop offset="0" stop-color="#00f"/><stop offset="0.76" stop-color="#5200ff"/><stop offset="1" stop-color="#6f00ff"/></linearGradient><linearGradient id="c172" gradientUnits="userSpaceOnUse" x1="780.0" x2="823.0" y1="0" y2="0"><stop offset="0" stop-color="#0400ff"/><stop offset="1" stop-color="#6300ff"/></linearGradient><linearGradient id="c173" gradientUnits="userSpaceOnUse" x1="783.0" x2="817.0" y1="0" y2="0"><stop offset="0" stop-color="#0b00ff"/><stop offset="1" stop-color="#5600ff"/></linearGradient><linearGradient id="c174" gradientUnits="userSpaceOnUse" x1="786.0" x2="812.0" y1="0" y2="0"><stop offset="0" stop-color="#1300ff"/><stop offset="1" stop-color="#4b00ff"/></linearGradient><linearGradient id="c175" gradientUnits="userSpaceOnUse" x1="789.0" x2="806.0" y1="0" y2="0"><stop offset="0" stop-color="#1a00ff"/><stop offset="1" stop-color="#3f00ff"/></linearGradient><linearGradient id="c176" gradientUnits="userSpaceOnUse" x1="791.0" x2="801.0" y1="0" y2="0"><stop offset="0" stop-color="#2000ff"/><stop offset="1" stop-color="#3500ff"/></linearGradient><clipPath id="loc"><path d="M796.3,385.2 796.3,385.2 796.3,385.2 796.3,385.2 796.2,385.2 796.2,385.2 796.2,385.2 796.1,385.2 796.1,385.2 796.1,385.2 796.0,385.2 795.9,385.2 795.9,385.3 795.8,385.3 795.8,385.3 795.7,385.3 795.7,385.3 795.6,385.3 795.5,385.3 795.4,385.3 795.3,385.3 795.2,385.3 795.1,385.2 795.0,385.2 794.9,385.1 794.7,385.0 794.5,384.9 794.3,384.8 794.0,384.7 793.8,384.5 793.5,384.4 793.2,384.1 792.8,383.9 792.4,383.6 792.0,383.3 791.6,383.0 791.1,382.7 790.6,382.3 790.0,381.9 789.3,381.4 788.6,380.9 787.8,380.4 786.9,379.8 786.0,379.1 785.0,378.4 783.9,377.6 782.7,376.7 781.4,375.8 780.1,374.6 778.7,373.4 777.2,372.0 775.5,370.3 773.7,368.2 771.6,365.7 769.4,362.7 767.0,359.2 764.4,355.1 761.6,350.3 758.5,344.7 755.2,338.3 751.7,330.8 747.8,322.2 743.7,312.6 739.5,301.8 735.3,289.6 731.1,276.2 727.0,261.6 722.8,245.8 718.8,228.8 715.2,211.5 711.9,193.7 709.1,175.6 706.9,157.9 705.4,140.8 704.6,124.1 704.6,108.4 705.5,93.6 707.3,79.9 710.0,67.7 713.7,57.2 718.3,48.4 723.5,41.4 729.3,36.6 735.8,33.6 742.5,32.1 749.5,32.1 756.8,33.4 764.0,35.3 771.3,37.8 778.7,40.8 785.9,44.0 792.9,47.3 799.7,50.7 806.5,54.3 813.1,58.1 819.7,62.0 826.2,66.0 832.8,70.1 839.3,74.4 845.7,78.7 852.2,83.2 858.6,87.8 865.0,92.4 871.4,97.1 877.9,101.8 884.3,106.6 890.7,111.5 897.1,116.3 903.6,121.3 910.0,126.2 916.4,131.2 922.7,136.1 929.1,141.1 935.5,146.1 941.8,151.0 948.1,155.9 954.3,160.8 960.5,165.7 966.6,170.5 972.7,175.3 978.7,180.0 984.6,184.7 990.4,189.2 996.1,193.7 1001.7,198.1 1007.2,202.4 1012.5,206.6 1017.6,210.7 1022.6,214.6 1027.4,218.4 1031.9,222.0 1036.2,225.4 1040.4,228.6 1044.4,231.8 1048.2,234.8 1051.8,237.6 1055.2,240.2 1058.3,242.7 1061.3,245.0 1064.1,247.2 1066.6,249.2 1069.0,251.1 1071.2,252.9 1073.3,254.5 1075.1,256.0 1076.9,257.3 1078.5,258.6 1080.1,259.8 1081.5,260.9 1082.8,261.9 1084.0,262.9 1085.2,263.8 1086.2,264.7 1087.3,265.5 1088.2,266.3 1089.1,267.0 1090.0,267.6 1090.7,268.2 1091.5,268.8 1092.1,269.3 1092.7,269.8 1093.3,270.2 1093.7,270.6 1094.2,270.9 1094.6,271.3 1095.0,271.6 1095.3,271.8 1095.6,272.1 1095.9,272.3 1096.1,272.5 1096.3,272.6 1096.5,272.7 1096.7,272.9 1096.8,273.0 1097.0,273.1 1097.1,273.2 1097.2,273.3 1097.4,273.4 1097.5,273.5 1097.6,273.6 1097.7,273.7 1097.8,273.8 1098.0,273.9 1098.1,274.0 1098.1,274.1 1098.2,274.1 1098.3,274.2 1098.3,274.2 1098.3,274.2 1098.4,274.2 1098.4,274.3 1098.4,274.3 1098.4,274.3Z"/></clipPath><linearGradient id="i0" gradientUnits="userSpaceOnUse" x1="1025.5" x2="1155.5" y1="0" y2="0"><stop offset="0" stop-color="#9cff00"/><stop offset="0.8077" stop-color="#fffc00"/><stop offset="1" stop-color="#ffe400"/></linearGradient><linearGradient id="i1" gradientUnits="userSpaceOnUse" x1="1025.5" x2="1155.5" y1="0" y2="0"><stop offset="0" stop-color="#9dff00"/><stop offset="0.7923" stop-color="#fffd00"/><stop offset="1" stop-color="#ffe300"/></linearGradient><linearGradient id="i2" gradientUnits="userSpaceOnUse" x1="1025.5" x2="1155.5" y1="0" y2="0"><stop offset="0" stop-color="#9fff00"/><stop offset="0.7769" stop-color="#fffd00"/><stop offset="1" stop-color="#ffe100"/></linearGradient><linearGradient id="i3" gradientUnits="userSpaceOnUse" x1="1025.5" x2="1155.5" y1="0" y2="0"><stop offset="0" stop-color="#a0ff00"/><stop offset="0.7615" stop-color="#fffd00"/><stop offset="1" stop-color="#ffdf00"/></linearGradient><linearGradient id="i4" gradientUnits="userSpaceOnUse" x1="1025.5" x2="1155.5" y1="0" y2="0"><stop offset="0" stop-color="#a1ff00"/><stop offset="0.7462" stop-color="#fffd00"/><stop offset="1" stop-color="#ffde00"/></linearGradient><linearGradient id="i5" gradientUnits="userSpaceOnUse" x1="1025.5" x2="1155.5" y1="0" y2="0"><stop offset="0" stop-color="#a3ff01"/><stop offset="0.7308" stop-color="#fffd00"/><stop offset="1" stop-color="#ffdc00"/></linearGradient><linearGradient id="i6" gradientUnits="userSpaceOnUse" x1="1025.5" x2="1155.5" y1="0" y2="0"><stop offset="0" stop-color="#a4ff02"/><stop offset="0.7231" stop-color="#fffd00"/><stop offset="1" stop-color="#ffdb00"/></linearGradient><linearGradient id="i7" gradientUnits="userSpaceOnUse" x1="1025.5" x2="1155.5" y1="0" y2="0"><stop offset="0" stop-color="#a5ff02"/><stop offset="0.7077" stop-color="#fffd00"/><stop offset="1" stop-color="#ffd900"/></linearGradient><linearGradient id="i8" gradientUnits="userSpaceOnUse" x1="1025.5" x2="1155.5" y1="0" y2="0"><stop offset="0" stop-color="#a7ff03"/><stop offset="0.5462" stop-color="#edff00"/><stop offset="0.6923" stop-color="#fffd00"/><stop offset="1" stop-color="#ffd700"/></linearGradient><linearGradient id="i9" gradientUnits="userSpaceOnUse" x1="1025.5" x2="1155.5" y1="0" y2="0"><stop offset="0" stop-color="#a8ff04"/><stop offset="0.3923" stop-color="#daff00"/><stop offset="0.6769" stop-color="#fffd00"/><stop offset="1" stop-color="#ffd600"/></linearGradient><linearGradient id="i10" gradientUnits="userSpaceOnUse" x1="1025.5" x2="1155.5" y1="0" y2="0"><stop offset="0" stop-color="#aaff05"/><stop offset="0.3615" stop-color="#d8ff00"/><stop offset="0.6615" stop-color="#fffd00"/><stop offset="1" stop-color="#ffd400"/></linearGradient><linearGradient id="i11" gradientUnits="userSpaceOnUse" x1="1025.5" x2="1155.5" y1="0" y2="0"><stop offset="0" stop-color="#abff06"/><stop offset="0.3615" stop-color="#d9ff00"/><stop offset="0.6538" stop-color="#fffc00"/><stop offset="1" stop-color="#ffd200"/></linearGradient><linearGradient id="i12" gradientUnits="userSpaceOnUse" x1="1025.5" x2="1155.5" y1="0" y2="0"><stop offset="0" stop-color="#adff06"/><stop offset="0.3769" stop-color="#df0"/><stop offset="0.6385" stop-color="#fffd00"/><stop offset="1" stop-color="#ffd100"/></linearGradient><linearGradient id="i13" gradientUnits="userSpaceOnUse" x1="1025.5" x2="1155.5" y1="0" y2="0"><stop offset="0" stop-color="#aeff07"/><stop offset="0.3923" stop-color="#e1ff00"/><stop offset="0.6231" stop-color="#fffd00"/><stop offset="1" stop-color="#ffcf00"/></linearGradient><linearGradient id="i14" gradientUnits="userSpaceOnUse" x1="1025.5" x2="1155.5" y1="0" y2="0"><stop offset="0" stop-color="#b0ff08"/><stop offset="0.4154" stop-color="#e6ff00"/><stop offset="0.6077" stop-color="#fffd00"/><stop offset="1" stop-color="#ffce00"/></linearGradient><linearGradient id="i15" gradientUnits="userSpaceOnUse" x1="1025.5" x2="1155.5" y1="0" y2="0"><stop offset="0" stop-color="#b1ff09"/><stop offset="0.4385" stop-color="#ebff00"/><stop offset="0.6" stop-color="#fffc00"/><stop offset="1" stop-color="#fc0"/></linearGradient><linearGradient id="i16" gradientUnits="userSpaceOnUse" x1="1025.5" x2="1155.5" y1="0" y2="0"><stop offset="0" stop-color="#b3ff0a"/><stop offset="0.4615" stop-color="#f0ff00"/><stop offset="0.5846" stop-color="#fffc00"/><stop offset="1" stop-color="#ffcb00"/></linearGradient><linearGradient id="i17" gradientUnits="userSpaceOnUse" x1="1025.5" x2="1155.5" y1="0" y2="0"><stop offset="0" stop-color="#b4ff0b"/><stop offset="0.4846" stop-color="#f5ff00"/><stop offset="0.5769" stop-color="#fffb00"/><stop offset="1" stop-color="#ffc900"/></linearGradient><linearGradient id="i18" gradientUnits="userSpaceOnUse" x1="1025.5" x2="1155.5" y1="0" y2="0"><stop offset="0" stop-color="#b6ff0c"/><stop offset="0.5154" stop-color="#fcff00"/><stop offset="0.6154" stop-color="#fff400"/><stop offset="1" stop-color="#ffc700"/></linearGradient><linearGradient id="i19" gradientUnits="userSpaceOnUse" x1="1025.5" x2="1155.5" y1="0" y2="0"><stop offset="0" stop-color="#b7ff0d"/><stop offset="0.5385" stop-color="#fffd00"/><stop offset="0.9846" stop-color="#ffc700"/><stop offset="1" stop-color="#ffc600"/></linearGradient><linearGradient id="i20" gradientUnits="userSpaceOnUse" x1="1025.5" x2="1155.5" y1="0" y2="0"><stop offset="0" stop-color="#b9ff0d"/><stop offset="0.5231" stop-color="#fffd00"/><stop offset="0.9692" stop-color="#ffc700"/><stop offset="1" stop-color="#ffc400"/></linearGradient><linearGradient id="i21" gradientUnits="userSpaceOnUse" x1="1025.5" x2="1155.5" y1="0" y2="0"><stop offset="0" stop-color="#baff0e"/><stop offset="0.5077" stop-color="#fffd00"/><stop offset="0.9538" stop-color="#ffc700"/><stop offset="1" stop-color="#ffc300"/></linearGradient><linearGradient id="i22" gradientUnits="userSpaceOnUse" x1="1025.5" x2="1155.5" y1="0" y2="0"><stop offset="0" stop-color="#bcff0f"/><stop offset="0.4923" stop-color="#fffd01"/><stop offset="0.9385" stop-color="#ffc700"/><stop offset="1" stop-color="#ffc100"/></linearGradient><linearGradient id="i23" gradientUnits="userSpaceOnUse" x1="1025.5" x2="1155.5" y1="0" y2="0"><stop offset="0" stop-color="#beff10"/><stop offset="0.4846" stop-color="#fffd02"/><stop offset="0.9308" stop-color="#ffc700"/><stop offset="1" stop-color="#ffc000"/></linearGradient><linearGradient id="i24" gradientUnits="userSpaceOnUse" x1="1025.5" x2="1155.5" y1="0" y2="0"><stop offset="0" stop-color="#bfff11"/><stop offset="0.4692" stop-color="#fffd03"/><stop offset="0.8846" stop-color="#ffca00"/><stop offset="1" stop-color="#ffbe00"/></linearGradient><linearGradient id="i25" gradientUnits="userSpaceOnUse" x1="1025.5" x2="1155.5" y1="0" y2="0"><stop offset="0" stop-color="#c1ff12"/><stop offset="0.4538" stop-color="#fffd05"/><stop offset="0.7769" stop-color="#ffd400"/><stop offset="1" stop-color="#ffbd00"/></linearGradient><linearGradient id="i26" gradientUnits="userSpaceOnUse" x1="1025.5" x2="1155.5" y1="0" y2="0"><stop offset="0" stop-color="#c3ff13"/><stop offset="0.4385" stop-color="#fffd06"/><stop offset="0.7692" stop-color="#ffd300"/><stop offset="1" stop-color="#fb0"/></linearGradient><linearGradient id="i27" gradientUnits="userSpaceOnUse" x1="1025.5" x2="1155.5" y1="0" y2="0"><stop offset="0" stop-color="#c4ff14"/><stop offset="0.4231" stop-color="#fffd08"/><stop offset="0.7846" stop-color="#ffcf00"/><stop offset="1" stop-color="#ffba00"/></linearGradient><linearGradient id="i28" gradientUnits="userSpaceOnUse" x1="1025.5" x2="1155.5" y1="0" y2="0"><stop offset="0" stop-color="#c6ff15"/><stop offset="0.4154" stop-color="#fffc09"/><stop offset="0.8077" stop-color="#ffcb00"/><stop offset="1" stop-color="#ffb800"/></linearGradient><linearGradient id="i29" gradientUnits="userSpaceOnUse" x1="1025.5" x2="1155.5" y1="0" y2="0"><stop offset="0" stop-color="#c8ff16"/><stop offset="0.4" stop-color="#fffd0a"/><stop offset="0.8308" stop-color="#ffc700"/><stop offset="1" stop-color="#ffb700"/></linearGradient><linearGradient id="i30" gradientUnits="userSpaceOnUse" x1="1025.5" x2="1155.5" y1="0" y2="0"><stop offset="0" stop-color="#c9ff17"/><stop offset="0.3846" stop-color="#fffd0c"/><stop offset="0.8154" stop-color="#ffc700"/><stop offset="1" stop-color="#ffb500"/></linearGradient><linearGradient id="i31" gradientUnits="userSpaceOnUse" x1="1025.5" x2="1155.5" y1="0" y2="0"><stop offset="0" stop-color="#cbff18"/><stop offset="0.3692" stop-color="#fffd0d"/><stop offset="0.8" stop-color="#ffc700"/><stop offset="1" stop-color="#ffb400"/></linearGradient><linearGradient id="i32" gradientUnits="userSpaceOnUse" x1="1025.5" x2="1155.5" y1="0" y2="0"><stop offset="0" stop-color="#cdff19"/><stop offset="0.3538" stop-color="#fffd0f"/><stop offset="0.7846" stop-color="#ffc701"/><stop offset="1" stop-color="#ffb200"/></linearGradient><linearGradient id="i33" gradientUnits="userSpaceOnUse" x1="1025.5" x2="1155.5" y1="0" y2="0"><stop offset="0" stop-color="#cfff1a"/><stop offset="0.3385" stop-color="#fffd10"/><stop offset="0.7615" stop-color="#ffc802"/><stop offset="1" stop-color="#ffb100"/></linearGradient><linearGradient id="i34" gradientUnits="userSpaceOnUse" x1="1025.5" x2="1155.5" y1="0" y2="0"><stop offset="0" stop-color="#d1ff1b"/><stop offset="0.3308" stop-color="#fffd11"/><stop offset="0.7615" stop-color="#ffc603"/><stop offset="1" stop-color="#ffb000"/></linearGradient><linearGradient id="i35" gradientUnits="userSpaceOnUse" x1="1025.5" x2="1155.5" y1="0" y2="0"><stop offset="0" stop-color="#d2ff1c"/><stop offset="0.3154" stop-color="#fffd13"/><stop offset="0.7385" stop-color="#ffc704"/><stop offset="1" stop-color="#ffae00"/></linearGradient><linearGradient id="i36" gradientUnits="userSpaceOnUse" x1="1025.5" x2="1155.5" y1="0" y2="0"><stop offset="0" stop-color="#d4ff1d"/><stop offset="0.3" stop-color="#fffd14"/><stop offset="0.7231" stop-color="#ffc706"/><stop offset="1" stop-color="#ffad00"/></linearGradient><linearGradient id="i37" gradientUnits="userSpaceOnUse" x1="1025.5" x2="1155.5" y1="0" y2="0"><stop offset="0" stop-color="#d6ff1e"/><stop offset="0.2846" stop-color="#fffd16"/><stop offset="0.7077" stop-color="#ffc707"/><stop offset="1" stop-color="#ffab00"/></linearGradient><linearGradient id="i38" gradientUnits="userSpaceOnUse" x1="1025.5" x2="1155.5" y1="0" y2="0"><stop offset="0" stop-color="#d8ff1f"/><stop offset="0.2692" stop-color="#fffd17"/><stop offset="0.6923" stop-color="#ffc708"/><stop offset="1" stop-color="#fa0"/></linearGradient><linearGradient id="i39" gradientUnits="userSpaceOnUse" x1="1025.5" x2="1155.5" y1="0" y2="0"><stop offset="0" stop-color="#daff20"/><stop offset="0.2615" stop-color="#fffc19"/><stop offset="0.6846" stop-color="#ffc609"/><stop offset="1" stop-color="#ffa800"/></linearGradient><linearGradient id="i40" gradientUnits="userSpaceOnUse" x1="1025.5" x2="1155.5" y1="0" y2="0"><stop offset="0" stop-color="#dcff22"/><stop offset="0.2462" stop-color="#fffd1a"/><stop offset="0.6615" stop-color="#ffc70b"/><stop offset="1" stop-color="#ffa701"/></linearGradient><linearGradient id="i41" gradientUnits="userSpaceOnUse" x1="1025.5" x2="1155.5" y1="0" y2="0"><stop offset="0" stop-color="#deff23"/><stop offset="0.2308" stop-color="#fffd1c"/><stop offset="0.6462" stop-color="#ffc70c"/><stop offset="1" stop-color="#ffa602"/></linearGradient><linearGradient id="i42" gradientUnits="userSpaceOnUse" x1="1025.5" x2="1155.5" y1="0" y2="0"><stop offset="0" stop-color="#e0ff24"/><stop offset="0.2154" stop-color="#fffd1d"/><stop offset="0.6308" stop-color="#ffc70d"/><stop offset="1" stop-color="#ffa402"/></linearGradient><linearGradient id="i43" gradientUnits="userSpaceOnUse" x1="1025.5" x2="1155.5" y1="0" y2="0"><stop offset="0" stop-color="#e2ff25"/><stop offset="0.2" stop-color="#fffd1f"/><stop offset="0.6154" stop-color="#ffc70e"/><stop offset="1" stop-color="#ffa303"/></linearGradient><clipPath id="ins"><rect x="1026.5" y="30.5" width="128.0" height="130.0"/></clipPath><linearGradient id="hd" x1="0" y1="0" x2="0" y2="1"><stop offset="0" stop-color="#343434"/><stop offset=".5" stop-color="#2a2a2a"/><stop offset=".52" stop-color="#0b0b0b"/><stop offset="1" stop-color="#181818"/></linearGradient><linearGradient id="sel" x1="0" y1="0" x2="0" y2="1"><stop offset="0" stop-color="#383838"/><stop offset="1" stop-color="#242424"/></linearGradient></defs><text x="13.5" y="39.8" font-size="28" textLength="228.0" lengthAdjust="spacingAndGlyphs" fill="#f4f4f4">Saturation Sweeps</text>
<rect x="30.0" y="88.0" width="178.0" height="316.0" fill="#232323"/>
<line x1="31.0" x2="207.0" y1="106.5" y2="106.5" stroke="#858585" stroke-width="1"/>
<line x1="27.0" x2="30.0" y1="106.5" y2="106.5" stroke="#dedede" stroke-width="1"/>
<text x="26.3" y="110.6" font-size="10.3" text-anchor="end" fill="#dcdcdc">80</text>
<line x1="31.0" x2="207.0" y1="141.5" y2="141.5" stroke="#858585" stroke-width="1"/>
<line x1="27.0" x2="30.0" y1="141.5" y2="141.5" stroke="#dedede" stroke-width="1"/>
<text x="26.3" y="145.6" font-size="10.3" text-anchor="end" fill="#dcdcdc">60</text>
<line x1="31.0" x2="207.0" y1="177.5" y2="177.5" stroke="#858585" stroke-width="1"/>
<line x1="27.0" x2="30.0" y1="177.5" y2="177.5" stroke="#dedede" stroke-width="1"/>
<text x="26.3" y="181.6" font-size="10.3" text-anchor="end" fill="#dcdcdc">40</text>
<line x1="31.0" x2="207.0" y1="211.5" y2="211.5" stroke="#858585" stroke-width="1"/>
<line x1="27.0" x2="30.0" y1="211.5" y2="211.5" stroke="#dedede" stroke-width="1"/>
<text x="26.3" y="215.6" font-size="10.3" text-anchor="end" fill="#dcdcdc">20</text>
<line x1="31.0" x2="207.0" y1="247.5" y2="247.5" stroke="#858585" stroke-width="1"/>
<line x1="27.0" x2="30.0" y1="247.5" y2="247.5" stroke="#dedede" stroke-width="1"/>
<text x="26.3" y="251.6" font-size="10.3" text-anchor="end" fill="#dcdcdc">0</text>
<line x1="31.0" x2="207.0" y1="281.5" y2="281.5" stroke="#858585" stroke-width="1"/>
<line x1="27.0" x2="30.0" y1="281.5" y2="281.5" stroke="#dedede" stroke-width="1"/>
<text x="26.3" y="285.6" font-size="10.3" text-anchor="end" fill="#dcdcdc">-20</text>
<line x1="31.0" x2="207.0" y1="316.5" y2="316.5" stroke="#858585" stroke-width="1"/>
<line x1="27.0" x2="30.0" y1="316.5" y2="316.5" stroke="#dedede" stroke-width="1"/>
<text x="26.3" y="320.6" font-size="10.3" text-anchor="end" fill="#dcdcdc">-40</text>
<line x1="31.0" x2="207.0" y1="352.5" y2="352.5" stroke="#858585" stroke-width="1"/>
<line x1="27.0" x2="30.0" y1="352.5" y2="352.5" stroke="#dedede" stroke-width="1"/>
<text x="26.3" y="356.6" font-size="10.3" text-anchor="end" fill="#dcdcdc">-60</text>
<line x1="31.0" x2="207.0" y1="386.5" y2="386.5" stroke="#858585" stroke-width="1"/>
<line x1="27.0" x2="30.0" y1="386.5" y2="386.5" stroke="#dedede" stroke-width="1"/>
<text x="26.3" y="390.6" font-size="10.3" text-anchor="end" fill="#dcdcdc">-80</text>
<rect x="48.5" y="246.5" width="47.0" height="32.0" fill="#ff0000"/>
<rect x="48.5" y="246.5" width="47.0" height="32.0" fill="url(#sh)" stroke="#000" stroke-width="1"/>
<rect x="96.5" y="246.5" width="46.0" height="20.0" fill="#008000"/>
<rect x="96.5" y="246.5" width="46.0" height="20.0" fill="url(#sh)" stroke="#000" stroke-width="1"/>
<rect x="143.5" y="102.5" width="47.0" height="144.0" fill="#0000ff"/>
<rect x="143.5" y="102.5" width="47.0" height="144.0" fill="url(#sh)" stroke="#000" stroke-width="1"/>
<line x1="30.0" x2="208.0" y1="88.5" y2="88.5" stroke="#9a9a9a" stroke-width="1"/>
<line x1="30.0" x2="208.0" y1="403.5" y2="403.5" stroke="#9a9a9a" stroke-width="1"/>
<line x1="30.5" x2="30.5" y1="88.0" y2="404.0" stroke="#9a9a9a" stroke-width="1"/>
<line x1="207.5" x2="207.5" y1="88.0" y2="404.0" stroke="#9a9a9a" stroke-width="1"/>
<line x1="30.5" x2="30.5" y1="404.0" y2="408.6" stroke="#dedede" stroke-width="1"/>
<line x1="207.5" x2="207.5" y1="404.0" y2="408.6" stroke="#dedede" stroke-width="1"/>
<text x="109.6" y="85.0" font-size="10.3" text-anchor="middle" textLength="57.4" lengthAdjust="spacingAndGlyphs" fill="#dcdcdc">RGB Balance</text>
<text x="119.3" y="414.9" font-size="10.3" text-anchor="middle" textLength="25.0" lengthAdjust="spacingAndGlyphs" fill="#dcdcdc">100%</text>
<rect x="277.0" y="30.0" width="97.0" height="191.0" fill="#232323"/>
<line x1="278.0" x2="373.0" y1="32.4" y2="32.4" stroke="#858585" stroke-width="1"/>
<line x1="274.0" x2="277.0" y1="32.5" y2="32.5" stroke="#dedede" stroke-width="1"/>
<line x1="278.0" x2="373.0" y1="63.5" y2="63.5" stroke="#858585" stroke-width="1"/>
<line x1="274.0" x2="277.0" y1="63.5" y2="63.5" stroke="#dedede" stroke-width="1"/>
<line x1="278.0" x2="373.0" y1="95.5" y2="95.5" stroke="#858585" stroke-width="1"/>
<line x1="274.0" x2="277.0" y1="95.5" y2="95.5" stroke="#dedede" stroke-width="1"/>
<line x1="278.0" x2="373.0" y1="127.5" y2="127.5" stroke="#858585" stroke-width="1"/>
<line x1="274.0" x2="277.0" y1="127.5" y2="127.5" stroke="#dedede" stroke-width="1"/>
<line x1="278.0" x2="373.0" y1="158.5" y2="158.5" stroke="#858585" stroke-width="1"/>
<line x1="274.0" x2="277.0" y1="158.5" y2="158.5" stroke="#dedede" stroke-width="1"/>
<line x1="278.0" x2="373.0" y1="190.5" y2="190.5" stroke="#858585" stroke-width="1"/>
<line x1="274.0" x2="277.0" y1="190.5" y2="190.5" stroke="#dedede" stroke-width="1"/>
<rect x="287.5" y="126.5" width="76.0" height="26.0" fill="#c8c800"/>
<rect x="287.5" y="126.5" width="76.0" height="26.0" fill="url(#sh)" stroke="#000" stroke-width="1"/>
<line x1="278.0" x2="373.0" y1="62.0" y2="62.0" stroke="#cc1a1a" stroke-width="1.6"/>
<line x1="278.0" x2="373.0" y1="189.4" y2="189.4" stroke="#cc1a1a" stroke-width="1.6"/>
<line x1="278.0" x2="373.0" y1="106.5" y2="106.5" stroke="#f2f200" stroke-width="1.2"/>
<line x1="278.0" x2="373.0" y1="144.5" y2="144.5" stroke="#f2f200" stroke-width="1.2"/>
<line x1="278.0" x2="373.0" y1="119.4" y2="119.4" stroke="#0e640e" stroke-width="1.5"/>
<line x1="278.0" x2="373.0" y1="131.8" y2="131.8" stroke="#0e640e" stroke-width="1.5"/>
<line x1="277.0" x2="374.0" y1="30.5" y2="30.5" stroke="#9a9a9a" stroke-width="1"/>
<line x1="277.0" x2="374.0" y1="221.0" y2="221.0" stroke="#9a9a9a" stroke-width="2"/>
<line x1="277.5" x2="277.5" y1="30.0" y2="222.0" stroke="#9a9a9a" stroke-width="1"/>
<line x1="373.5" x2="373.5" y1="30.0" y2="222.0" stroke="#9a9a9a" stroke-width="1"/>
<line x1="277.5" x2="277.5" y1="222.0" y2="226.6" stroke="#dedede" stroke-width="1"/>
<line x1="373.5" x2="373.5" y1="222.0" y2="226.6" stroke="#dedede" stroke-width="1"/>
<text x="272.8" y="36.0" font-size="10.3" text-anchor="end" fill="#dcdcdc">15</text>
<text x="272.8" y="67.1" font-size="10.3" text-anchor="end" fill="#dcdcdc">10</text>
<text x="272.8" y="99.1" font-size="10.3" text-anchor="end" fill="#dcdcdc">5</text>
<text x="272.8" y="131.1" font-size="10.3" text-anchor="end" fill="#dcdcdc">0</text>
<text x="272.8" y="162.1" font-size="10.3" text-anchor="end" fill="#dcdcdc">-5</text>
<text x="272.8" y="194.1" font-size="10.3" text-anchor="end" fill="#dcdcdc">-10</text>
<text x="272.8" y="226.0" font-size="10.3" text-anchor="end" fill="#dcdcdc">-15</text>
<text x="316.6" y="27.0" font-size="10.3" text-anchor="middle" textLength="28.6" lengthAdjust="spacingAndGlyphs" fill="#dcdcdc">DeltaL</text>
<text x="326.0" y="232.0" font-size="10.3" text-anchor="middle" textLength="24.4" lengthAdjust="spacingAndGlyphs" fill="#dcdcdc">100%</text>
<rect x="410.0" y="30.0" width="97.0" height="191.0" fill="#232323"/>
<line x1="411.0" x2="506.0" y1="32.4" y2="32.4" stroke="#858585" stroke-width="1"/>
<line x1="407.0" x2="410.0" y1="32.5" y2="32.5" stroke="#dedede" stroke-width="1"/>
<line x1="411.0" x2="506.0" y1="79.0" y2="79.0" stroke="#858585" stroke-width="1"/>
<line x1="407.0" x2="410.0" y1="79.5" y2="79.5" stroke="#dedede" stroke-width="1"/>
<line x1="411.0" x2="506.0" y1="127.5" y2="127.5" stroke="#858585" stroke-width="1"/>
<line x1="407.0" x2="410.0" y1="127.5" y2="127.5" stroke="#dedede" stroke-width="1"/>
<line x1="411.0" x2="506.0" y1="174.5" y2="174.5" stroke="#858585" stroke-width="1"/>
<line x1="407.0" x2="410.0" y1="174.5" y2="174.5" stroke="#dedede" stroke-width="1"/>
<rect x="420.5" y="126.5" width="76.0" height="76.0" fill="#c8c800"/>
<rect x="420.5" y="126.5" width="76.0" height="76.0" fill="url(#sh)" stroke="#000" stroke-width="1"/>
<line x1="411.0" x2="506.0" y1="78.0" y2="78.0" stroke="#cc1a1a" stroke-width="1.6"/>
<line x1="411.0" x2="506.0" y1="173.5" y2="173.5" stroke="#ff3010" stroke-width="1.4" stroke-opacity="0.9"/>
<line x1="411.0" x2="506.0" y1="111.3" y2="111.3" stroke="#d8d420" stroke-width="1.3" stroke-opacity="0.9"/>
<line x1="411.0" x2="506.0" y1="139.6" y2="139.6" stroke="#e8e860" stroke-width="1.2" stroke-opacity="0.75"/>
<line x1="411.0" x2="506.0" y1="120.5" y2="120.5" stroke="#0e640e" stroke-width="1.5"/>
<line x1="411.0" x2="506.0" y1="130.0" y2="130.0" stroke="#3f9a1f" stroke-width="1.3" stroke-opacity="0.8"/>
<line x1="410.0" x2="507.0" y1="30.5" y2="30.5" stroke="#9a9a9a" stroke-width="1"/>
<line x1="410.0" x2="507.0" y1="221.0" y2="221.0" stroke="#9a9a9a" stroke-width="2"/>
<line x1="410.5" x2="410.5" y1="30.0" y2="222.0" stroke="#9a9a9a" stroke-width="1"/>
<line x1="506.5" x2="506.5" y1="30.0" y2="222.0" stroke="#9a9a9a" stroke-width="1"/>
<line x1="410.5" x2="410.5" y1="222.0" y2="226.6" stroke="#dedede" stroke-width="1"/>
<line x1="506.5" x2="506.5" y1="222.0" y2="226.6" stroke="#dedede" stroke-width="1"/>
<text x="405.8" y="36.0" font-size="10.3" text-anchor="end" fill="#dcdcdc">20</text>
<text x="405.8" y="82.6" font-size="10.3" text-anchor="end" fill="#dcdcdc">10</text>
<text x="405.8" y="131.1" font-size="10.3" text-anchor="end" fill="#dcdcdc">0</text>
<text x="405.8" y="178.1" font-size="10.3" text-anchor="end" fill="#dcdcdc">-10</text>
<text x="405.8" y="226.0" font-size="10.3" text-anchor="end" fill="#dcdcdc">-20</text>
<text x="449.5" y="27.0" font-size="10.3" text-anchor="middle" textLength="29.7" lengthAdjust="spacingAndGlyphs" fill="#dcdcdc">DeltaC</text>
<text x="459.2" y="232.0" font-size="10.3" text-anchor="middle" textLength="24.4" lengthAdjust="spacingAndGlyphs" fill="#dcdcdc">100%</text>
<rect x="543.0" y="30.0" width="97.0" height="191.0" fill="#232323"/>
<line x1="544.0" x2="639.0" y1="32.4" y2="32.4" stroke="#858585" stroke-width="1"/>
<line x1="540.0" x2="543.0" y1="32.5" y2="32.5" stroke="#dedede" stroke-width="1"/>
<line x1="544.0" x2="639.0" y1="63.5" y2="63.5" stroke="#858585" stroke-width="1"/>
<line x1="540.0" x2="543.0" y1="63.5" y2="63.5" stroke="#dedede" stroke-width="1"/>
<line x1="544.0" x2="639.0" y1="95.5" y2="95.5" stroke="#858585" stroke-width="1"/>
<line x1="540.0" x2="543.0" y1="95.5" y2="95.5" stroke="#dedede" stroke-width="1"/>
<line x1="544.0" x2="639.0" y1="127.5" y2="127.5" stroke="#858585" stroke-width="1"/>
<line x1="540.0" x2="543.0" y1="127.5" y2="127.5" stroke="#dedede" stroke-width="1"/>
<line x1="544.0" x2="639.0" y1="158.5" y2="158.5" stroke="#858585" stroke-width="1"/>
<line x1="540.0" x2="543.0" y1="158.5" y2="158.5" stroke="#dedede" stroke-width="1"/>
<line x1="544.0" x2="639.0" y1="190.5" y2="190.5" stroke="#858585" stroke-width="1"/>
<line x1="540.0" x2="543.0" y1="190.5" y2="190.5" stroke="#dedede" stroke-width="1"/>
<rect x="553.5" y="96.5" width="76.0" height="30.0" fill="#c8c800"/>
<rect x="553.5" y="96.5" width="76.0" height="30.0" fill="url(#sh)" stroke="#000" stroke-width="1"/>
<line x1="544.0" x2="639.0" y1="62.0" y2="62.0" stroke="#cc1a1a" stroke-width="1.6"/>
<line x1="544.0" x2="639.0" y1="189.4" y2="189.4" stroke="#cc1a1a" stroke-width="1.6"/>
<line x1="544.0" x2="639.0" y1="106.5" y2="106.5" stroke="#f2f200" stroke-width="1.2"/>
<line x1="544.0" x2="639.0" y1="144.5" y2="144.5" stroke="#f2f200" stroke-width="1.2"/>
<line x1="544.0" x2="639.0" y1="119.4" y2="119.4" stroke="#0e640e" stroke-width="1.5"/>
<line x1="544.0" x2="639.0" y1="131.8" y2="131.8" stroke="#0e640e" stroke-width="1.5"/>
<line x1="543.0" x2="640.0" y1="30.5" y2="30.5" stroke="#9a9a9a" stroke-width="1"/>
<line x1="543.0" x2="640.0" y1="221.0" y2="221.0" stroke="#9a9a9a" stroke-width="2"/>
<line x1="543.5" x2="543.5" y1="30.0" y2="222.0" stroke="#9a9a9a" stroke-width="1"/>
<line x1="639.5" x2="639.5" y1="30.0" y2="222.0" stroke="#9a9a9a" stroke-width="1"/>
<line x1="543.5" x2="543.5" y1="222.0" y2="226.6" stroke="#dedede" stroke-width="1"/>
<line x1="639.5" x2="639.5" y1="222.0" y2="226.6" stroke="#dedede" stroke-width="1"/>
<text x="538.8" y="36.0" font-size="10.3" text-anchor="end" fill="#dcdcdc">15</text>
<text x="538.8" y="67.1" font-size="10.3" text-anchor="end" fill="#dcdcdc">10</text>
<text x="538.8" y="99.1" font-size="10.3" text-anchor="end" fill="#dcdcdc">5</text>
<text x="538.8" y="131.1" font-size="10.3" text-anchor="end" fill="#dcdcdc">0</text>
<text x="538.8" y="162.1" font-size="10.3" text-anchor="end" fill="#dcdcdc">-5</text>
<text x="538.8" y="194.1" font-size="10.3" text-anchor="end" fill="#dcdcdc">-10</text>
<text x="538.8" y="226.0" font-size="10.3" text-anchor="end" fill="#dcdcdc">-15</text>
<text x="582.4" y="27.0" font-size="10.3" text-anchor="middle" textLength="30.5" lengthAdjust="spacingAndGlyphs" fill="#dcdcdc">DeltaH</text>
<text x="592.4" y="232.0" font-size="10.3" text-anchor="middle" textLength="24.4" lengthAdjust="spacingAndGlyphs" fill="#dcdcdc">100%</text>
<rect x="231.0" y="244.0" width="432.0" height="116.0" fill="#000"/>
<rect x="245.3" y="249.3" width="72.2" height="41.2" fill="#adbdd6" stroke="#f2f2f2" stroke-width="1"/>
<rect x="245.3" y="302.4" width="72.2" height="40.6" fill="#bfbfa3" stroke="#f2f2f2" stroke-width="1"/>
<text x="281.7" y="354.3" font-size="8.8" text-anchor="middle" textLength="16.4" lengthAdjust="spacingAndGlyphs" fill="#fff" stroke="#fff" stroke-width=".35">20%</text>
<rect x="330.5" y="249.3" width="72.2" height="41.2" fill="#aebab3" stroke="#f2f2f2" stroke-width="1"/>
<rect x="330.5" y="302.4" width="72.2" height="40.6" fill="#bfbf85" stroke="#f2f2f2" stroke-width="1"/>
<text x="366.9" y="354.3" font-size="8.8" text-anchor="middle" textLength="16.4" lengthAdjust="spacingAndGlyphs" fill="#fff" stroke="#fff" stroke-width=".35">40%</text>
<rect x="415.4" y="249.3" width="72.2" height="41.2" fill="#aeb798" stroke="#f2f2f2" stroke-width="1"/>
<rect x="415.4" y="302.4" width="72.2" height="40.6" fill="#bfbf69" stroke="#f2f2f2" stroke-width="1"/>
<text x="451.8" y="354.3" font-size="8.8" text-anchor="middle" textLength="16.4" lengthAdjust="spacingAndGlyphs" fill="#fff" stroke="#fff" stroke-width=".35">60%</text>
<rect x="499.4" y="249.3" width="72.2" height="41.2" fill="#adb470" stroke="#f2f2f2" stroke-width="1"/>
<rect x="499.4" y="302.4" width="72.2" height="40.6" fill="#bfbf49" stroke="#f2f2f2" stroke-width="1"/>
<text x="535.8" y="354.3" font-size="8.8" text-anchor="middle" textLength="16.4" lengthAdjust="spacingAndGlyphs" fill="#fff" stroke="#fff" stroke-width=".35">80%</text>
<rect x="584.5" y="249.3" width="71.0" height="41.2" fill="#adb243" stroke="#f2f2f2" stroke-width="1"/>
<rect x="584.5" y="302.4" width="71.0" height="40.6" fill="#bfbf00" stroke="#f2f2f2" stroke-width="1"/>
<text x="620.3" y="354.3" font-size="8.8" text-anchor="middle" textLength="21.5" lengthAdjust="spacingAndGlyphs" fill="#fff" stroke="#fff" stroke-width=".35">100%</text>
<text transform="translate(240.4,269.8) rotate(-90)" font-size="8.8" stroke="#fff" stroke-width=".35" text-anchor="middle" fill="#fff" textLength="24.5" lengthAdjust="spacingAndGlyphs">Actual</text>
<text transform="translate(240.4,322.3) rotate(-90)" font-size="8.8" stroke="#fff" stroke-width=".35" text-anchor="middle" fill="#fff" textLength="25.3" lengthAdjust="spacingAndGlyphs">Target</text>
<rect x="240.0" y="381.0" width="424.0" height="177.0" fill="#232323"/>
<line x1="241.0" x2="663.0" y1="417.5" y2="417.5" stroke="#858585" stroke-width="1"/>
<line x1="241.0" x2="663.0" y1="453.5" y2="453.5" stroke="#858585" stroke-width="1"/>
<line x1="241.0" x2="663.0" y1="523.5" y2="523.5" stroke="#858585" stroke-width="1"/>
<rect x="318.5" y="434.5" width="6.0" height="122.5" fill="#bf9898"/>
<rect x="318.5" y="434.5" width="6.0" height="122.5" fill="url(#sh2)" stroke="#000" stroke-width="1"/>
<rect x="326.5" y="419.5" width="7.0" height="137.5" fill="#98bf98"/>
<rect x="326.5" y="419.5" width="7.0" height="137.5" fill="url(#sh2)" stroke="#000" stroke-width="1"/>
<rect x="334.5" y="492.5" width="6.0" height="64.5" fill="#9898bf"/>
<rect x="334.5" y="492.5" width="6.0" height="64.5" fill="url(#sh2)" stroke="#000" stroke-width="1"/>
<rect x="341.5" y="451.5" width="7.0" height="105.5" fill="#98bfbf"/>
<rect x="341.5" y="451.5" width="7.0" height="105.5" fill="url(#sh2)" stroke="#000" stroke-width="1"/>
<rect x="349.5" y="461.5" width="6.0" height="95.5" fill="#bf98bf"/>
<rect x="349.5" y="461.5" width="6.0" height="95.5" fill="url(#sh2)" stroke="#000" stroke-width="1"/>
<rect x="356.5" y="401.5" width="7.0" height="155.5" fill="#bfbf98"/>
<rect x="356.5" y="401.5" width="7.0" height="155.5" fill="url(#sh2)" stroke="#000" stroke-width="1"/>
<rect x="389.5" y="445.5" width="6.0" height="111.5" fill="#bf7676"/>
<rect x="389.5" y="445.5" width="6.0" height="111.5" fill="url(#sh2)" stroke="#000" stroke-width="1"/>
<rect x="396.5" y="460.5" width="7.0" height="96.5" fill="#76bf76"/>
<rect x="396.5" y="460.5" width="7.0" height="96.5" fill="url(#sh2)" stroke="#000" stroke-width="1"/>
<rect x="404.5" y="498.5" width="6.0" height="58.5" fill="#7676bf"/>
<rect x="404.5" y="498.5" width="6.0" height="58.5" fill="url(#sh2)" stroke="#000" stroke-width="1"/>
<rect x="411.5" y="453.5" width="7.0" height="103.5" fill="#76bfbf"/>
<rect x="411.5" y="453.5" width="7.0" height="103.5" fill="url(#sh2)" stroke="#000" stroke-width="1"/>
<rect x="419.5" y="469.5" width="6.0" height="87.5" fill="#bf76bf"/>
<rect x="419.5" y="469.5" width="6.0" height="87.5" fill="url(#sh2)" stroke="#000" stroke-width="1"/>
<rect x="427.5" y="441.5" width="6.0" height="115.5" fill="#bfbf76"/>
<rect x="427.5" y="441.5" width="6.0" height="115.5" fill="url(#sh2)" stroke="#000" stroke-width="1"/>
<rect x="459.5" y="469.5" width="7.0" height="87.5" fill="#bf5656"/>
<rect x="459.5" y="469.5" width="7.0" height="87.5" fill="url(#sh2)" stroke="#000" stroke-width="1"/>
<rect x="467.5" y="491.5" width="6.0" height="65.5" fill="#56bf56"/>
<rect x="467.5" y="491.5" width="6.0" height="65.5" fill="url(#sh2)" stroke="#000" stroke-width="1"/>
<rect x="474.5" y="488.5" width="7.0" height="68.5" fill="#5656bf"/>
<rect x="474.5" y="488.5" width="7.0" height="68.5" fill="url(#sh2)" stroke="#000" stroke-width="1"/>
<rect x="482.5" y="456.5" width="6.0" height="100.5" fill="#56bfbf"/>
<rect x="482.5" y="456.5" width="6.0" height="100.5" fill="url(#sh2)" stroke="#000" stroke-width="1"/>
<rect x="489.5" y="472.5" width="7.0" height="84.5" fill="#bf56bf"/>
<rect x="489.5" y="472.5" width="7.0" height="84.5" fill="url(#sh2)" stroke="#000" stroke-width="1"/>
<rect x="497.5" y="474.5" width="7.0" height="82.5" fill="#bfbf56"/>
<rect x="497.5" y="474.5" width="7.0" height="82.5" fill="url(#sh2)" stroke="#000" stroke-width="1"/>
<rect x="529.5" y="489.5" width="7.0" height="67.5" fill="#bf3a3a"/>
<rect x="529.5" y="489.5" width="7.0" height="67.5" fill="url(#sh2)" stroke="#000" stroke-width="1"/>
<rect x="537.5" y="514.5" width="6.0" height="42.5" fill="#3abf3a"/>
<rect x="537.5" y="514.5" width="6.0" height="42.5" fill="url(#sh2)" stroke="#000" stroke-width="1"/>
<rect x="544.5" y="475.5" width="6.0" height="81.5" fill="#3a3abf"/>
<rect x="544.5" y="475.5" width="6.0" height="81.5" fill="url(#sh2)" stroke="#000" stroke-width="1"/>
<rect x="552.5" y="458.5" width="7.0" height="98.5" fill="#3abfbf"/>
<rect x="552.5" y="458.5" width="7.0" height="98.5" fill="url(#sh2)" stroke="#000" stroke-width="1"/>
<rect x="560.5" y="474.5" width="6.0" height="82.5" fill="#bf3abf"/>
<rect x="560.5" y="474.5" width="6.0" height="82.5" fill="url(#sh2)" stroke="#000" stroke-width="1"/>
<rect x="567.5" y="497.5" width="7.0" height="59.5" fill="#bfbf3a"/>
<rect x="567.5" y="497.5" width="7.0" height="59.5" fill="url(#sh2)" stroke="#000" stroke-width="1"/>
<rect x="600.5" y="477.5" width="6.0" height="79.5" fill="#bf0000"/>
<rect x="600.5" y="477.5" width="6.0" height="79.5" fill="url(#sh2)" stroke="#000" stroke-width="1"/>
<rect x="607.5" y="524.5" width="6.0" height="32.5" fill="#00bf00"/>
<rect x="607.5" y="524.5" width="6.0" height="32.5" fill="url(#sh2)" stroke="#000" stroke-width="1"/>
<rect x="615.5" y="431.5" width="6.0" height="125.5" fill="#0000bf"/>
<rect x="615.5" y="431.5" width="6.0" height="125.5" fill="url(#sh2)" stroke="#000" stroke-width="1"/>
<rect x="622.5" y="454.5" width="7.0" height="102.5" fill="#00bfbf"/>
<rect x="622.5" y="454.5" width="7.0" height="102.5" fill="url(#sh2)" stroke="#000" stroke-width="1"/>
<rect x="630.5" y="467.5" width="7.0" height="89.5" fill="#bf00bf"/>
<rect x="630.5" y="467.5" width="7.0" height="89.5" fill="url(#sh2)" stroke="#000" stroke-width="1"/>
<rect x="638.5" y="514.5" width="6.0" height="42.5" fill="#bfbf00"/>
<rect x="638.5" y="514.5" width="6.0" height="42.5" fill="url(#sh2)" stroke="#000" stroke-width="1"/>
<rect x="293.5" y="505.5" width="6.0" height="51.5" fill="#ffffff"/>
<rect x="293.5" y="505.5" width="6.0" height="51.5" fill="url(#sh2)" stroke="#000" stroke-width="1"/>
<line x1="241.0" x2="663.0" y1="487.4" y2="487.4" stroke="#f01010" stroke-width="1.15"/>
<line x1="241.0" x2="663.0" y1="536.9" y2="536.9" stroke="#d0d010" stroke-width="2.1" stroke-opacity="0.72"/>
<line x1="241.0" x2="663.0" y1="550.8" y2="550.8" stroke="#0a5e0a" stroke-width="2.3" stroke-opacity="0.88"/>
<line x1="240.0" x2="664.0" y1="381.5" y2="381.5" stroke="#9a9a9a" stroke-width="1"/>
<line x1="240.0" x2="664.0" y1="557.5" y2="557.5" stroke="#9a9a9a" stroke-width="1"/>
<line x1="241.0" x2="663.0" y1="382.5" y2="382.5" stroke="#858585" stroke-width="1" stroke-opacity="0.45"/>
<line x1="240.5" x2="240.5" y1="381.0" y2="558.0" stroke="#9a9a9a" stroke-width="1"/>
<line x1="663.5" x2="663.5" y1="381.0" y2="558.0" stroke="#9a9a9a" stroke-width="1"/>
<line x1="240.5" x2="240.5" y1="558.0" y2="562.6" stroke="#dedede" stroke-width="1"/>
<line x1="310.5" x2="310.5" y1="558.0" y2="562.6" stroke="#dedede" stroke-width="1"/>
<line x1="381.5" x2="381.5" y1="558.0" y2="562.6" stroke="#dedede" stroke-width="1"/>
<line x1="451.5" x2="451.5" y1="558.0" y2="562.6" stroke="#dedede" stroke-width="1"/>
<line x1="522.5" x2="522.5" y1="558.0" y2="562.6" stroke="#dedede" stroke-width="1"/>
<line x1="592.5" x2="592.5" y1="558.0" y2="562.6" stroke="#dedede" stroke-width="1"/>
<line x1="663.5" x2="663.5" y1="558.0" y2="562.6" stroke="#dedede" stroke-width="1"/>
<line x1="237.0" x2="240.0" y1="382.5" y2="382.5" stroke="#dedede" stroke-width="1"/>
<text x="236.2" y="387.0" font-size="10.3" text-anchor="end" fill="#dcdcdc">25</text>
<line x1="237.0" x2="240.0" y1="417.5" y2="417.5" stroke="#dedede" stroke-width="1"/>
<text x="236.2" y="421.9" font-size="10.3" text-anchor="end" fill="#dcdcdc">20</text>
<line x1="237.0" x2="240.0" y1="453.5" y2="453.5" stroke="#dedede" stroke-width="1"/>
<text x="236.2" y="457.1" font-size="10.3" text-anchor="end" fill="#dcdcdc">15</text>
<line x1="237.0" x2="240.0" y1="488.5" y2="488.5" stroke="#dedede" stroke-width="1"/>
<text x="236.2" y="492.0" font-size="10.3" text-anchor="end" fill="#dcdcdc">10</text>
<line x1="237.0" x2="240.0" y1="523.5" y2="523.5" stroke="#dedede" stroke-width="1"/>
<text x="236.2" y="527.0" font-size="10.3" text-anchor="end" fill="#dcdcdc">5</text>
<line x1="237.0" x2="240.0" y1="557.5" y2="557.5" stroke="#dedede" stroke-width="1"/>
<text x="236.2" y="563.3" font-size="10.3" text-anchor="end" fill="#dcdcdc">0</text>
<text x="275.8" y="568.8" font-size="10.3" text-anchor="middle" textLength="16.4" lengthAdjust="spacingAndGlyphs" fill="#dcdcdc">100</text>
<text x="346.2" y="568.8" font-size="10.3" text-anchor="middle" textLength="18.2" lengthAdjust="spacingAndGlyphs" fill="#dcdcdc">20%</text>
<text x="416.3" y="568.8" font-size="10.3" text-anchor="middle" textLength="18.4" lengthAdjust="spacingAndGlyphs" fill="#dcdcdc">40%</text>
<text x="487.6" y="568.8" font-size="10.3" text-anchor="middle" textLength="18.6" lengthAdjust="spacingAndGlyphs" fill="#dcdcdc">60%</text>
<text x="557.9" y="568.8" font-size="10.3" text-anchor="middle" textLength="18.6" lengthAdjust="spacingAndGlyphs" fill="#dcdcdc">80%</text>
<text x="628.4" y="568.8" font-size="10.3" text-anchor="middle" textLength="24.3" lengthAdjust="spacingAndGlyphs" fill="#dcdcdc">100%</text>
<text x="444.5" y="377.6" font-size="10.3" text-anchor="middle" textLength="55.0" lengthAdjust="spacingAndGlyphs" fill="#dcdcdc">DeltaE 2000</text>
<text x="7.2" y="444.6" font-size="19.8" textLength="153.4" lengthAdjust="spacingAndGlyphs" fill="#f4f4f4">Current Reading</text>
<text x="7.6" y="474.6" font-size="18.4" textLength="71.6" lengthAdjust="spacingAndGlyphs" fill="#f4f4f4">x: 0,3947</text>
<text x="7.6" y="502.9" font-size="18.4" textLength="71.6" lengthAdjust="spacingAndGlyphs" fill="#f4f4f4">y: 0,4777</text>
<text x="7.8" y="531.7" font-size="18.4" textLength="67.0" lengthAdjust="spacingAndGlyphs" fill="#f4f4f4">fL: 29,33</text>
<text x="7.4" y="560.5" font-size="18.4" textLength="120.8" lengthAdjust="spacingAndGlyphs" fill="#f4f4f4">cd/m²: 100,491</text>
<rect x="676.5" y="7.5" width="486.0" height="405.3" fill="#1b1b1b" stroke="#383838" stroke-width="1"/>
<rect x="682.0" y="13.0" width="475.5" height="394.5" fill="#333333"/>
<rect x="702.0" y="29.0" width="453.0" height="359.0" fill="#232323"/>
<g clip-path="url(#loc)"><rect x="733.0" y="32" width="28.0" height="2" fill="url(#c0)"/><rect x="729.0" y="34" width="39.0" height="2" fill="url(#c1)"/><rect x="726.0" y="36" width="47.0" height="2" fill="url(#c2)"/><rect x="724.0" y="38" width="54.0" height="2" fill="url(#c3)"/><rect x="722.0" y="40" width="61.0" height="2" fill="url(#c4)"/><rect x="720.0" y="42" width="67.0" height="2" fill="url(#c5)"/><rect x="719.0" y="44" width="73.0" height="2" fill="url(#c6)"/><rect x="717.0" y="46" width="79.0" height="2" fill="url(#c7)"/><rect x="716.0" y="48" width="84.0" height="2" fill="url(#c8)"/><rect x="715.0" y="50" width="89.0" height="2" fill="url(#c9)"/><rect x="714.0" y="52" width="93.0" height="2" fill="url(#c10)"/><rect x="713.0" y="54" width="98.0" height="2" fill="url(#c11)"/><rect x="712.0" y="56" width="102.0" height="2" fill="url(#c12)"/><rect x="711.0" y="58" width="107.0" height="2" fill="url(#c13)"/><rect x="711.0" y="60" width="110.0" height="2" fill="url(#c14)"/><rect x="710.0" y="62" width="115.0" height="2" fill="url(#c15)"/><rect x="709.0" y="64" width="119.0" height="2" fill="url(#c16)"/><rect x="708.0" y="66" width="123.0" height="2" fill="url(#c17)"/><rect x="708.0" y="68" width="126.0" height="2" fill="url(#c18)"/><rect x="708.0" y="70" width="129.0" height="2" fill="url(#c19)"/><rect x="707.0" y="72" width="133.0" height="2" fill="url(#c20)"/><rect x="707.0" y="74" width="136.0" height="2" fill="url(#c21)"/><rect x="706.0" y="76" width="140.0" height="2" fill="url(#c22)"/><rect x="706.0" y="78" width="143.0" height="2" fill="url(#c23)"/><rect x="706.0" y="80" width="146.0" height="2" fill="url(#c24)"/><rect x="705.0" y="82" width="150.0" height="2" fill="url(#c25)"/><rect x="705.0" y="84" width="153.0" height="2" fill="url(#c26)"/><rect x="705.0" y="86" width="155.0" height="2" fill="url(#c27)"/><rect x="704.0" y="88" width="159.0" height="2" fill="url(#c28)"/><rect x="704.0" y="90" width="162.0" height="2" fill="url(#c29)"/><rect x="704.0" y="92" width="165.0" height="2" fill="url(#c30)"/><rect x="704.0" y="94" width="167.0" height="2" fill="url(#c31)"/><rect x="704.0" y="96" width="170.0" height="2" fill="url(#c32)"/><rect x="704.0" y="98" width="173.0" height="2" fill="url(#c33)"/><rect x="704.0" y="100" width="176.0" height="2" fill="url(#c34)"/><rect x="703.0" y="102" width="179.0" height="2" fill="url(#c35)"/><rect x="703.0" y="104" width="182.0" height="2" fill="url(#c36)"/><rect x="703.0" y="106" width="185.0" height="2" fill="url(#c37)"/><rect x="703.0" y="108" width="187.0" height="2" fill="url(#c38)"/><rect x="703.0" y="110" width="190.0" height="2" fill="url(#c39)"/><rect x="703.0" y="112" width="193.0" height="2" fill="url(#c40)"/><rect x="703.0" y="114" width="195.0" height="2" fill="url(#c41)"/><rect x="703.0" y="116" width="198.0" height="2" fill="url(#c42)"/><rect x="703.0" y="118" width="200.0" height="2" fill="url(#c43)"/><rect x="703.0" y="120" width="203.0" height="2" fill="url(#c44)"/><rect x="703.0" y="122" width="206.0" height="2" fill="url(#c45)"/><rect x="703.0" y="124" width="208.0" height="2" fill="url(#c46)"/><rect x="703.0" y="126" width="211.0" height="2" fill="url(#c47)"/><rect x="703.0" y="128" width="213.0" height="2" fill="url(#c48)"/><rect x="703.0" y="130" width="216.0" height="2" fill="url(#c49)"/><rect x="703.0" y="132" width="219.0" height="2" fill="url(#c50)"/><rect x="704.0" y="134" width="220.0" height="2" fill="url(#c51)"/><rect x="704.0" y="136" width="223.0" height="2" fill="url(#c52)"/><rect x="704.0" y="138" width="225.0" height="2" fill="url(#c53)"/><rect x="704.0" y="140" width="228.0" height="2" fill="url(#c54)"/><rect x="704.0" y="142" width="230.0" height="2" fill="url(#c55)"/><rect x="704.0" y="144" width="233.0" height="2" fill="url(#c56)"/><rect x="704.0" y="146" width="235.0" height="2" fill="url(#c57)"/><rect x="705.0" y="148" width="237.0" height="2" fill="url(#c58)"/><rect x="705.0" y="150" width="240.0" height="2" fill="url(#c59)"/><rect x="705.0" y="152" width="242.0" height="2" fill="url(#c60)"/><rect x="705.0" y="154" width="245.0" height="2" fill="url(#c61)"/><rect x="705.0" y="156" width="247.0" height="2" fill="url(#c62)"/><rect x="705.0" y="158" width="250.0" height="2" fill="url(#c63)"/><rect x="706.0" y="160" width="251.0" height="2" fill="url(#c64)"/><rect x="706.0" y="162" width="254.0" height="2" fill="url(#c65)"/><rect x="706.0" y="164" width="256.0" height="2" fill="url(#c66)"/><rect x="706.0" y="166" width="259.0" height="2" fill="url(#c67)"/><rect x="707.0" y="168" width="260.0" height="2" fill="url(#c68)"/><rect x="707.0" y="170" width="263.0" height="2" fill="url(#c69)"/><rect x="707.0" y="172" width="266.0" height="2" fill="url(#c70)"/><rect x="707.0" y="174" width="268.0" height="2" fill="url(#c71)"/><rect x="708.0" y="176" width="270.0" height="2" fill="url(#c72)"/><rect x="708.0" y="178" width="272.0" height="2" fill="url(#c73)"/><rect x="708.0" y="180" width="275.0" height="2" fill="url(#c74)"/><rect x="709.0" y="182" width="276.0" height="2" fill="url(#c75)"/><rect x="709.0" y="184" width="279.0" height="2" fill="url(#c76)"/><rect x="709.0" y="186" width="281.0" height="2" fill="url(#c77)"/><rect x="710.0" y="188" width="283.0" height="2" fill="url(#c78)"/><rect x="710.0" y="190" width="285.0" height="2" fill="url(#c79)"/><rect x="710.0" y="192" width="288.0" height="2" fill="url(#c80)"/><rect x="710.0" y="194" width="290.0" height="2" fill="url(#c81)"/><rect x="711.0" y="196" width="292.0" height="2" fill="url(#c82)"/><rect x="711.0" y="198" width="295.0" height="2" fill="url(#c83)"/><rect x="712.0" y="200" width="296.0" height="2" fill="url(#c84)"/><rect x="712.0" y="202" width="299.0" height="2" fill="url(#c85)"/><rect x="712.0" y="204" width="301.0" height="2" fill="url(#c86)"/><rect x="713.0" y="206" width="303.0" height="2" fill="url(#c87)"/><rect x="713.0" y="208" width="305.0" height="2" fill="url(#c88)"/><rect x="713.0" y="210" width="308.0" height="2" fill="url(#c89)"/><rect x="714.0" y="212" width="309.0" height="2" fill="url(#c90)"/><rect x="714.0" y="214" width="312.0" height="2" fill="url(#c91)"/><rect x="715.0" y="216" width="313.0" height="2" fill="url(#c92)"/><rect x="715.0" y="218" width="316.0" height="2" fill="url(#c93)"/><rect x="715.0" y="220" width="318.0" height="2" fill="url(#c94)"/><rect x="716.0" y="222" width="320.0" height="2" fill="url(#c95)"/><rect x="716.0" y="224" width="323.0" height="2" fill="url(#c96)"/><rect x="717.0" y="226" width="324.0" height="2" fill="url(#c97)"/><rect x="717.0" y="228" width="327.0" height="2" fill="url(#c98)"/><rect x="718.0" y="230" width="328.0" height="2" fill="url(#c99)"/><rect x="718.0" y="232" width="331.0" height="2" fill="url(#c100)"/><rect x="719.0" y="234" width="332.0" height="2" fill="url(#c101)"/><rect x="719.0" y="236" width="335.0" height="2" fill="url(#c102)"/><rect x="719.0" y="238" width="337.0" height="2" fill="url(#c103)"/><rect x="720.0" y="240" width="339.0" height="2" fill="url(#c104)"/><rect x="720.0" y="242" width="342.0" height="2" fill="url(#c105)"/><rect x="721.0" y="244" width="343.0" height="2" fill="url(#c106)"/><rect x="721.0" y="246" width="346.0" height="2" fill="url(#c107)"/><rect x="722.0" y="248" width="347.0" height="2" fill="url(#c108)"/><rect x="722.0" y="250" width="350.0" height="2" fill="url(#c109)"/><rect x="723.0" y="252" width="351.0" height="2" fill="url(#c110)"/><rect x="723.0" y="254" width="354.0" height="2" fill="url(#c111)"/><rect x="724.0" y="256" width="355.0" height="2" fill="url(#c112)"/><rect x="725.0" y="258" width="357.0" height="2" fill="url(#c113)"/><rect x="725.0" y="260" width="359.0" height="2" fill="url(#c114)"/><rect x="726.0" y="262" width="361.0" height="2" fill="url(#c115)"/><rect x="726.0" y="264" width="363.0" height="2" fill="url(#c116)"/><rect x="727.0" y="266" width="365.0" height="2" fill="url(#c117)"/><rect x="727.0" y="268" width="368.0" height="2" fill="url(#c118)"/><rect x="728.0" y="270" width="369.0" height="2" fill="url(#c119)"/><rect x="728.0" y="272" width="372.0" height="2" fill="url(#c120)"/><rect x="729.0" y="274" width="371.0" height="2" fill="url(#c121)"/><rect x="730.0" y="276" width="365.0" height="2" fill="url(#c122)"/><rect x="730.0" y="278" width="360.0" height="2" fill="url(#c123)"/><rect x="731.0" y="280" width="353.0" height="2" fill="url(#c124)"/><rect x="731.0" y="282" width="348.0" height="2" fill="url(#c125)"/><rect x="732.0" y="284" width="341.0" height="2" fill="url(#c126)"/><rect x="733.0" y="286" width="335.0" height="2" fill="url(#c127)"/><rect x="733.0" y="288" width="330.0" height="2" fill="url(#c128)"/><rect x="734.0" y="290" width="323.0" height="2" fill="url(#c129)"/><rect x="735.0" y="292" width="317.0" height="2" fill="url(#c130)"/><rect x="735.0" y="294" width="311.0" height="2" fill="url(#c131)"/><rect x="736.0" y="296" width="305.0" height="2" fill="url(#c132)"/><rect x="737.0" y="298" width="298.0" height="2" fill="url(#c133)"/><rect x="737.0" y="300" width="293.0" height="2" fill="url(#c134)"/><rect x="738.0" y="302" width="286.0" height="2" fill="url(#c135)"/><rect x="739.0" y="304" width="280.0" height="2" fill="url(#c136)"/><rect x="740.0" y="306" width="274.0" height="2" fill="url(#c137)"/><rect x="740.0" y="308" width="268.0" height="2" fill="url(#c138)"/><rect x="741.0" y="310" width="262.0" height="2" fill="url(#c139)"/><rect x="742.0" y="312" width="255.0" height="2" fill="url(#c140)"/><rect x="743.0" y="314" width="249.0" height="2" fill="url(#c141)"/><rect x="744.0" y="316" width="242.0" height="2" fill="url(#c142)"/><rect x="745.0" y="318" width="236.0" height="2" fill="url(#c143)"/><rect x="745.0" y="320" width="230.0" height="2" fill="url(#c144)"/><rect x="746.0" y="322" width="224.0" height="2" fill="url(#c145)"/><rect x="747.0" y="324" width="217.0" height="2" fill="url(#c146)"/><rect x="748.0" y="326" width="211.0" height="2" fill="url(#c147)"/><rect x="749.0" y="328" width="205.0" height="2" fill="url(#c148)"/><rect x="750.0" y="330" width="198.0" height="2" fill="url(#c149)"/><rect x="751.0" y="332" width="192.0" height="2" fill="url(#c150)"/><rect x="752.0" y="334" width="185.0" height="2" fill="url(#c151)"/><rect x="753.0" y="336" width="179.0" height="2" fill="url(#c152)"/><rect x="754.0" y="338" width="172.0" height="2" fill="url(#c153)"/><rect x="755.0" y="340" width="166.0" height="2" fill="url(#c154)"/><rect x="756.0" y="342" width="159.0" height="2" fill="url(#c155)"/><rect x="757.0" y="344" width="153.0" height="2" fill="url(#c156)"/><rect x="758.0" y="346" width="147.0" height="2" fill="url(#c157)"/><rect x="759.0" y="348" width="140.0" height="2" fill="url(#c158)"/><rect x="760.0" y="350" width="134.0" height="2" fill="url(#c159)"/><rect x="761.0" y="352" width="127.0" height="2" fill="url(#c160)"/><rect x="762.0" y="354" width="121.0" height="2" fill="url(#c161)"/><rect x="763.0" y="356" width="114.0" height="2" fill="url(#c162)"/><rect x="765.0" y="358" width="107.0" height="2" fill="url(#c163)"/><rect x="766.0" y="360" width="100.0" height="2" fill="url(#c164)"/><rect x="767.0" y="362" width="94.0" height="2" fill="url(#c165)"/><rect x="769.0" y="364" width="86.0" height="2" fill="url(#c166)"/><rect x="770.0" y="366" width="80.0" height="2" fill="url(#c167)"/><rect x="772.0" y="368" width="73.0" height="2" fill="url(#c168)"/><rect x="774.0" y="370" width="65.0" height="2" fill="url(#c169)"/><rect x="776.0" y="372" width="58.0" height="2" fill="url(#c170)"/><rect x="778.0" y="374" width="50.0" height="2" fill="url(#c171)"/><rect x="780.0" y="376" width="43.0" height="2" fill="url(#c172)"/><rect x="783.0" y="378" width="34.0" height="2" fill="url(#c173)"/><rect x="786.0" y="380" width="26.0" height="2" fill="url(#c174)"/><rect x="789.0" y="382" width="17.0" height="2" fill="url(#c175)"/><rect x="791.0" y="384" width="10.0" height="2" fill="url(#c176)"/></g>
<path d="M796.3,385.2 796.3,385.2 796.3,385.2 796.3,385.2 796.2,385.2 796.2,385.2 796.2,385.2 796.1,385.2 796.1,385.2 796.1,385.2 796.0,385.2 795.9,385.2 795.9,385.3 795.8,385.3 795.8,385.3 795.7,385.3 795.7,385.3 795.6,385.3 795.5,385.3 795.4,385.3 795.3,385.3 795.2,385.3 795.1,385.2 795.0,385.2 794.9,385.1 794.7,385.0 794.5,384.9 794.3,384.8 794.0,384.7 793.8,384.5 793.5,384.4 793.2,384.1 792.8,383.9 792.4,383.6 792.0,383.3 791.6,383.0 791.1,382.7 790.6,382.3 790.0,381.9 789.3,381.4 788.6,380.9 787.8,380.4 786.9,379.8 786.0,379.1 785.0,378.4 783.9,377.6 782.7,376.7 781.4,375.8 780.1,374.6 778.7,373.4 777.2,372.0 775.5,370.3 773.7,368.2 771.6,365.7 769.4,362.7 767.0,359.2 764.4,355.1 761.6,350.3 758.5,344.7 755.2,338.3 751.7,330.8 747.8,322.2 743.7,312.6 739.5,301.8 735.3,289.6 731.1,276.2 727.0,261.6 722.8,245.8 718.8,228.8 715.2,211.5 711.9,193.7 709.1,175.6 706.9,157.9 705.4,140.8 704.6,124.1 704.6,108.4 705.5,93.6 707.3,79.9 710.0,67.7 713.7,57.2 718.3,48.4 723.5,41.4 729.3,36.6 735.8,33.6 742.5,32.1 749.5,32.1 756.8,33.4 764.0,35.3 771.3,37.8 778.7,40.8 785.9,44.0 792.9,47.3 799.7,50.7 806.5,54.3 813.1,58.1 819.7,62.0 826.2,66.0 832.8,70.1 839.3,74.4 845.7,78.7 852.2,83.2 858.6,87.8 865.0,92.4 871.4,97.1 877.9,101.8 884.3,106.6 890.7,111.5 897.1,116.3 903.6,121.3 910.0,126.2 916.4,131.2 922.7,136.1 929.1,141.1 935.5,146.1 941.8,151.0 948.1,155.9 954.3,160.8 960.5,165.7 966.6,170.5 972.7,175.3 978.7,180.0 984.6,184.7 990.4,189.2 996.1,193.7 1001.7,198.1 1007.2,202.4 1012.5,206.6 1017.6,210.7 1022.6,214.6 1027.4,218.4 1031.9,222.0 1036.2,225.4 1040.4,228.6 1044.4,231.8 1048.2,234.8 1051.8,237.6 1055.2,240.2 1058.3,242.7 1061.3,245.0 1064.1,247.2 1066.6,249.2 1069.0,251.1 1071.2,252.9 1073.3,254.5 1075.1,256.0 1076.9,257.3 1078.5,258.6 1080.1,259.8 1081.5,260.9 1082.8,261.9 1084.0,262.9 1085.2,263.8 1086.2,264.7 1087.3,265.5 1088.2,266.3 1089.1,267.0 1090.0,267.6 1090.7,268.2 1091.5,268.8 1092.1,269.3 1092.7,269.8 1093.3,270.2 1093.7,270.6 1094.2,270.9 1094.6,271.3 1095.0,271.6 1095.3,271.8 1095.6,272.1 1095.9,272.3 1096.1,272.5 1096.3,272.6 1096.5,272.7 1096.7,272.9 1096.8,273.0 1097.0,273.1 1097.1,273.2 1097.2,273.3 1097.4,273.4 1097.5,273.5 1097.6,273.6 1097.7,273.7 1097.8,273.8 1098.0,273.9 1098.1,274.0 1098.1,274.1 1098.2,274.1 1098.3,274.2 1098.3,274.2 1098.3,274.2 1098.4,274.2 1098.4,274.3 1098.4,274.3 1098.4,274.3Z M1047.4,247.1 864.2,132.4 783.3,361.8Z" fill-rule="evenodd" fill="#000" fill-opacity=".4"/>
<line x1="702.0" x2="1025.0" y1="29.5" y2="29.5" stroke="#9a9a9a" stroke-width="1"/>
<line x1="702.0" x2="1155.0" y1="387.5" y2="387.5" stroke="#9a9a9a" stroke-width="1"/>
<line x1="702.5" x2="702.5" y1="29.0" y2="388.0" stroke="#9a9a9a" stroke-width="1"/>
<line x1="1154.5" x2="1154.5" y1="161.0" y2="388.0" stroke="#9a9a9a" stroke-width="1"/>
<line x1="702.5" x2="702.5" y1="388.0" y2="392.6" stroke="#dedede" stroke-width="1"/>
<line x1="699.0" x2="702.0" y1="387.5" y2="387.5" stroke="#dedede" stroke-width="1"/>
<text x="698.2" y="392.0" font-size="10.3" text-anchor="end" textLength="5.6" lengthAdjust="spacingAndGlyphs" fill="#dcdcdc">0</text>
<text x="702.6" y="402.9" font-size="10.3" text-anchor="middle" textLength="5.6" lengthAdjust="spacingAndGlyphs" fill="#dcdcdc">0</text>
<line x1="699.0" x2="702.0" y1="344.5" y2="344.5" stroke="#dedede" stroke-width="1"/>
<text x="698.2" y="349.5" font-size="10.3" text-anchor="end" textLength="13.7" lengthAdjust="spacingAndGlyphs" fill="#dcdcdc">0,1</text>
<line x1="756.5" x2="756.5" y1="388.0" y2="392.6" stroke="#dedede" stroke-width="1"/>
<text x="756.5" y="402.9" font-size="10.3" text-anchor="middle" textLength="13.7" lengthAdjust="spacingAndGlyphs" fill="#dcdcdc">0,1</text>
<line x1="699.0" x2="702.0" y1="302.5" y2="302.5" stroke="#dedede" stroke-width="1"/>
<text x="698.2" y="307.0" font-size="10.3" text-anchor="end" textLength="13.7" lengthAdjust="spacingAndGlyphs" fill="#dcdcdc">0,2</text>
<line x1="810.5" x2="810.5" y1="388.0" y2="392.6" stroke="#dedede" stroke-width="1"/>
<text x="810.4" y="402.9" font-size="10.3" text-anchor="middle" textLength="13.7" lengthAdjust="spacingAndGlyphs" fill="#dcdcdc">0,2</text>
<line x1="699.0" x2="702.0" y1="259.5" y2="259.5" stroke="#dedede" stroke-width="1"/>
<text x="698.2" y="264.6" font-size="10.3" text-anchor="end" textLength="13.7" lengthAdjust="spacingAndGlyphs" fill="#dcdcdc">0,3</text>
<line x1="864.5" x2="864.5" y1="388.0" y2="392.6" stroke="#dedede" stroke-width="1"/>
<text x="864.3" y="402.9" font-size="10.3" text-anchor="middle" textLength="13.7" lengthAdjust="spacingAndGlyphs" fill="#dcdcdc">0,3</text>
<line x1="699.0" x2="702.0" y1="217.5" y2="217.5" stroke="#dedede" stroke-width="1"/>
<text x="698.2" y="222.1" font-size="10.3" text-anchor="end" textLength="13.7" lengthAdjust="spacingAndGlyphs" fill="#dcdcdc">0,4</text>
<line x1="918.5" x2="918.5" y1="388.0" y2="392.6" stroke="#dedede" stroke-width="1"/>
<text x="918.2" y="402.9" font-size="10.3" text-anchor="middle" textLength="13.7" lengthAdjust="spacingAndGlyphs" fill="#dcdcdc">0,4</text>
<line x1="699.0" x2="702.0" y1="174.5" y2="174.5" stroke="#dedede" stroke-width="1"/>
<text x="698.2" y="179.6" font-size="10.3" text-anchor="end" textLength="13.7" lengthAdjust="spacingAndGlyphs" fill="#dcdcdc">0,5</text>
<line x1="971.5" x2="971.5" y1="388.0" y2="392.6" stroke="#dedede" stroke-width="1"/>
<text x="972.1" y="402.9" font-size="10.3" text-anchor="middle" textLength="13.7" lengthAdjust="spacingAndGlyphs" fill="#dcdcdc">0,5</text>
<line x1="699.0" x2="702.0" y1="132.5" y2="132.5" stroke="#dedede" stroke-width="1"/>
<text x="698.2" y="137.1" font-size="10.3" text-anchor="end" textLength="13.7" lengthAdjust="spacingAndGlyphs" fill="#dcdcdc">0,6</text>
<line x1="1025.5" x2="1025.5" y1="388.0" y2="392.6" stroke="#dedede" stroke-width="1"/>
<text x="1025.9" y="402.9" font-size="10.3" text-anchor="middle" textLength="13.7" lengthAdjust="spacingAndGlyphs" fill="#dcdcdc">0,6</text>
<line x1="699.0" x2="702.0" y1="89.5" y2="89.5" stroke="#dedede" stroke-width="1"/>
<text x="698.2" y="94.6" font-size="10.3" text-anchor="end" textLength="13.7" lengthAdjust="spacingAndGlyphs" fill="#dcdcdc">0,7</text>
<text x="1079.8" y="402.9" font-size="10.3" text-anchor="middle" textLength="13.7" lengthAdjust="spacingAndGlyphs" fill="#dcdcdc">0,7</text>
<line x1="699.0" x2="702.0" y1="47.5" y2="47.5" stroke="#dedede" stroke-width="1"/>
<text x="698.2" y="52.2" font-size="10.3" text-anchor="end" textLength="13.7" lengthAdjust="spacingAndGlyphs" fill="#dcdcdc">0,8</text>
<line x1="1133.5" x2="1133.5" y1="388.0" y2="392.6" stroke="#dedede" stroke-width="1"/>
<text x="1133.7" y="402.9" font-size="10.3" text-anchor="middle" textLength="13.7" lengthAdjust="spacingAndGlyphs" fill="#dcdcdc">0,8</text>
<text x="919.6" y="25.9" font-size="10.3" text-anchor="middle" textLength="52.8" lengthAdjust="spacingAndGlyphs" fill="#dcdcdc">CIE 1931 xy</text>
<rect x="900.5" y="242.5" width="10.0" height="10.0" fill="none" stroke="#fff" stroke-width="1" stroke-opacity="0.95"/>
<rect x="936.5" y="241.5" width="10.0" height="10.0" fill="none" stroke="#fff" stroke-width="1" stroke-opacity="0.95"/>
<rect x="968.5" y="241.5" width="10.0" height="10.0" fill="none" stroke="#fff" stroke-width="1" stroke-opacity="0.95"/>
<rect x="1002.5" y="241.5" width="10.0" height="10.0" fill="none" stroke="#fff" stroke-width="1" stroke-opacity="0.95"/>
<rect x="1041.5" y="241.5" width="10.0" height="10.0" fill="none" stroke="#fff" stroke-width="1" stroke-opacity="0.95"/>
<rect x="863.5" y="218.5" width="10.0" height="10.0" fill="none" stroke="#fff" stroke-width="1" stroke-opacity="0.95"/>
<rect x="863.5" y="196.5" width="10.0" height="10.0" fill="none" stroke="#fff" stroke-width="1" stroke-opacity="0.95"/>
<rect x="861.5" y="174.5" width="10.0" height="10.0" fill="none" stroke="#fff" stroke-width="1" stroke-opacity="0.95"/>
<rect x="860.5" y="151.5" width="10.0" height="10.0" fill="none" stroke="#fff" stroke-width="1" stroke-opacity="0.95"/>
<rect x="858.5" y="126.5" width="10.0" height="10.0" fill="none" stroke="#fff" stroke-width="1" stroke-opacity="0.95"/>
<rect x="847.5" y="265.5" width="10.0" height="10.0" fill="none" stroke="#fff" stroke-width="1" stroke-opacity="0.95"/>
<rect x="830.5" y="287.5" width="10.0" height="10.0" fill="none" stroke="#fff" stroke-width="1" stroke-opacity="0.95"/>
<rect x="813.5" y="309.5" width="10.0" height="10.0" fill="none" stroke="#fff" stroke-width="1" stroke-opacity="0.95"/>
<rect x="796.5" y="331.5" width="10.0" height="10.0" fill="none" stroke="#fff" stroke-width="1" stroke-opacity="0.95"/>
<rect x="777.5" y="356.5" width="10.0" height="10.0" fill="none" stroke="#fff" stroke-width="1" stroke-opacity="0.95"/>
<rect x="855.5" y="242.5" width="10.0" height="10.0" fill="none" stroke="#fff" stroke-width="1" stroke-opacity="0.95"/>
<rect x="846.5" y="242.5" width="10.0" height="10.0" fill="none" stroke="#fff" stroke-width="1" stroke-opacity="0.95"/>
<rect x="837.5" y="242.5" width="10.0" height="10.0" fill="none" stroke="#fff" stroke-width="1" stroke-opacity="0.95"/>
<rect x="827.5" y="242.5" width="10.0" height="10.0" fill="none" stroke="#fff" stroke-width="1" stroke-opacity="0.95"/>
<rect x="818.5" y="242.5" width="10.0" height="10.0" fill="none" stroke="#fff" stroke-width="1" stroke-opacity="0.95"/>
<rect x="866.5" y="256.5" width="10.0" height="10.0" fill="none" stroke="#fff" stroke-width="1" stroke-opacity="0.95"/>
<rect x="867.5" y="271.5" width="10.0" height="10.0" fill="none" stroke="#fff" stroke-width="1" stroke-opacity="0.95"/>
<rect x="867.5" y="285.5" width="10.0" height="10.0" fill="none" stroke="#fff" stroke-width="1" stroke-opacity="0.95"/>
<rect x="868.5" y="301.5" width="10.0" height="10.0" fill="none" stroke="#fff" stroke-width="1" stroke-opacity="0.95"/>
<rect x="869.5" y="316.5" width="10.0" height="10.0" fill="none" stroke="#fff" stroke-width="1" stroke-opacity="0.95"/>
<rect x="877.5" y="226.5" width="10.0" height="10.0" fill="none" stroke="#fff" stroke-width="1" stroke-opacity="0.95"/>
<rect x="888.5" y="211.5" width="10.0" height="10.0" fill="none" stroke="#fff" stroke-width="1" stroke-opacity="0.95"/>
<rect x="900.5" y="196.5" width="10.0" height="10.0" fill="none" stroke="#fff" stroke-width="1" stroke-opacity="0.95"/>
<rect x="910.5" y="182.5" width="10.0" height="10.0" fill="none" stroke="#fff" stroke-width="1" stroke-opacity="0.95"/>
<rect x="923.5" y="167.5" width="10.0" height="10.0" fill="none" stroke="#fff" stroke-width="1" stroke-opacity="0.95"/>
<rect x="866.5" y="242.5" width="10.0" height="10.0" fill="none" stroke="#000" stroke-width="1.4" stroke-opacity="1"/>
<circle cx="846.9" cy="254.0" r="2.9" fill="#a0b890" stroke="#000" stroke-width=".95" stroke-opacity=".82"/>
<circle cx="849.9" cy="235.4" r="2.9" fill="#8fb878" stroke="#000" stroke-width=".95" stroke-opacity=".82"/>
<circle cx="854.4" cy="211.5" r="2.9" fill="#6ab86a" stroke="#000" stroke-width=".95" stroke-opacity=".82"/>
<circle cx="861.5" cy="181.0" r="2.9" fill="#3aa83a" stroke="#000" stroke-width=".95" stroke-opacity=".82"/>
<circle cx="869.0" cy="146.4" r="2.9" fill="#0abf0a" stroke="#000" stroke-width=".95" stroke-opacity=".82"/>
<circle cx="865.9" cy="269.8" r="2.9" fill="#c09c80" stroke="#000" stroke-width=".95" stroke-opacity=".82"/>
<circle cx="892.5" cy="267.3" r="2.9" fill="#c86c5c" stroke="#000" stroke-width=".95" stroke-opacity=".82"/>
<circle cx="922.4" cy="263.5" r="2.9" fill="#c04a42" stroke="#000" stroke-width=".95" stroke-opacity=".82"/>
<circle cx="964.0" cy="257.0" r="2.5" fill="#c83838" stroke="#000" stroke-width=".95" stroke-opacity=".82"/>
<circle cx="994.4" cy="251.0" r="2.9" fill="#c80a0a" stroke="#000" stroke-width=".95" stroke-opacity=".82"/>
<circle cx="839.7" cy="269.3" r="2.9" fill="#a8c0b0" stroke="#000" stroke-width=".95" stroke-opacity=".82"/>
<circle cx="834.0" cy="270.3" r="2.9" fill="#90c0b0" stroke="#000" stroke-width=".95" stroke-opacity=".82"/>
<circle cx="827.4" cy="271.4" r="2.9" fill="#70c0b0" stroke="#000" stroke-width=".95" stroke-opacity=".82"/>
<circle cx="821.4" cy="271.4" r="2.9" fill="#50c0a8" stroke="#000" stroke-width=".95" stroke-opacity=".82"/>
<circle cx="815.4" cy="273.5" r="2.9" fill="#20c8b0" stroke="#000" stroke-width=".95" stroke-opacity=".82"/>
<circle cx="844.4" cy="280.0" r="2.9" fill="#c8a8b8" stroke="#000" stroke-width=".95" stroke-opacity=".82"/>
<circle cx="842.5" cy="290.6" r="2.9" fill="#c890c0" stroke="#000" stroke-width=".95" stroke-opacity=".82"/>
<circle cx="840.4" cy="300.6" r="2.9" fill="#c870c0" stroke="#000" stroke-width=".95" stroke-opacity=".82"/>
<circle cx="839.4" cy="310.6" r="2.9" fill="#c850b8" stroke="#000" stroke-width=".95" stroke-opacity=".82"/>
<circle cx="838.4" cy="319.5" r="2.9" fill="#c810a0" stroke="#000" stroke-width=".95" stroke-opacity=".82"/>
<circle cx="831.0" cy="286.4" r="2.9" fill="#a8a8c8" stroke="#000" stroke-width=".95" stroke-opacity=".82"/>
<circle cx="817.5" cy="302.9" r="2.9" fill="#8888c8" stroke="#000" stroke-width=".95" stroke-opacity=".82"/>
<circle cx="806.4" cy="316.3" r="2.9" fill="#6262c0" stroke="#000" stroke-width=".95" stroke-opacity=".82"/>
<circle cx="796.0" cy="331.0" r="2.5" fill="#4242b0" stroke="#000" stroke-width=".95" stroke-opacity=".82"/>
<circle cx="787.4" cy="340.4" r="2.9" fill="#0a0ac0" stroke="#000" stroke-width=".95" stroke-opacity=".82"/>
<circle cx="855.6" cy="257.4" r="2.9" fill="#b8b898" stroke="#000" stroke-width=".95" stroke-opacity=".82"/>
<circle cx="867.1" cy="244.4" r="2.9" fill="#b8b478" stroke="#000" stroke-width=".95" stroke-opacity=".82"/>
<circle cx="880.6" cy="227.9" r="2.9" fill="#b5b358" stroke="#000" stroke-width=".95" stroke-opacity=".82"/>
<circle cx="895.6" cy="208.3" r="2.9" fill="#b5b040" stroke="#000" stroke-width=".95" stroke-opacity=".82"/>
<circle cx="914.4" cy="183.5" r="2.9" fill="#b0b000" stroke="#000" stroke-width=".95" stroke-opacity=".82"/>
<circle cx="862.4" cy="251.0" r="2.9" fill="#ffffff" stroke="#000" stroke-width=".95" stroke-opacity=".82"/>
<g clip-path="url(#ins)"><g><rect x="1025.5" y="30" width="130.0" height="3" fill="url(#i0)"/><rect x="1025.5" y="33" width="130.0" height="3" fill="url(#i1)"/><rect x="1025.5" y="36" width="130.0" height="3" fill="url(#i2)"/><rect x="1025.5" y="39" width="130.0" height="3" fill="url(#i3)"/><rect x="1025.5" y="42" width="130.0" height="3" fill="url(#i4)"/><rect x="1025.5" y="45" width="130.0" height="3" fill="url(#i5)"/><rect x="1025.5" y="48" width="130.0" height="3" fill="url(#i6)"/><rect x="1025.5" y="51" width="130.0" height="3" fill="url(#i7)"/><rect x="1025.5" y="54" width="130.0" height="3" fill="url(#i8)"/><rect x="1025.5" y="57" width="130.0" height="3" fill="url(#i9)"/><rect x="1025.5" y="60" width="130.0" height="3" fill="url(#i10)"/><rect x="1025.5" y="63" width="130.0" height="3" fill="url(#i11)"/><rect x="1025.5" y="66" width="130.0" height="3" fill="url(#i12)"/><rect x="1025.5" y="69" width="130.0" height="3" fill="url(#i13)"/><rect x="1025.5" y="72" width="130.0" height="3" fill="url(#i14)"/><rect x="1025.5" y="75" width="130.0" height="3" fill="url(#i15)"/><rect x="1025.5" y="78" width="130.0" height="3" fill="url(#i16)"/><rect x="1025.5" y="81" width="130.0" height="3" fill="url(#i17)"/><rect x="1025.5" y="84" width="130.0" height="3" fill="url(#i18)"/><rect x="1025.5" y="87" width="130.0" height="3" fill="url(#i19)"/><rect x="1025.5" y="90" width="130.0" height="3" fill="url(#i20)"/><rect x="1025.5" y="93" width="130.0" height="3" fill="url(#i21)"/><rect x="1025.5" y="96" width="130.0" height="3" fill="url(#i22)"/><rect x="1025.5" y="99" width="130.0" height="3" fill="url(#i23)"/><rect x="1025.5" y="102" width="130.0" height="3" fill="url(#i24)"/><rect x="1025.5" y="105" width="130.0" height="3" fill="url(#i25)"/><rect x="1025.5" y="108" width="130.0" height="3" fill="url(#i26)"/><rect x="1025.5" y="111" width="130.0" height="3" fill="url(#i27)"/><rect x="1025.5" y="114" width="130.0" height="3" fill="url(#i28)"/><rect x="1025.5" y="117" width="130.0" height="3" fill="url(#i29)"/><rect x="1025.5" y="120" width="130.0" height="3" fill="url(#i30)"/><rect x="1025.5" y="123" width="130.0" height="3" fill="url(#i31)"/><rect x="1025.5" y="126" width="130.0" height="3" fill="url(#i32)"/><rect x="1025.5" y="129" width="130.0" height="3" fill="url(#i33)"/><rect x="1025.5" y="132" width="130.0" height="3" fill="url(#i34)"/><rect x="1025.5" y="135" width="130.0" height="3" fill="url(#i35)"/><rect x="1025.5" y="138" width="130.0" height="3" fill="url(#i36)"/><rect x="1025.5" y="141" width="130.0" height="3" fill="url(#i37)"/><rect x="1025.5" y="144" width="130.0" height="3" fill="url(#i38)"/><rect x="1025.5" y="147" width="130.0" height="3" fill="url(#i39)"/><rect x="1025.5" y="150" width="130.0" height="3" fill="url(#i40)"/><rect x="1025.5" y="153" width="130.0" height="3" fill="url(#i41)"/><rect x="1025.5" y="156" width="130.0" height="3" fill="url(#i42)"/><rect x="1025.5" y="159" width="130.0" height="3" fill="url(#i43)"/></g>
<path d="M854.8,-92.0 L1524.6,439.9 L1524.6,-92.0 Z" fill="#000" fill-opacity=".4"/>
<rect x="1084.5" y="89.5" width="10.0" height="10.0" fill="none" stroke="#fff" stroke-width="1" stroke-opacity="0.95"/>
<circle cx="1041.5" cy="149.4" r="3.3" fill="#b0b000" stroke="#000" stroke-width=".95" stroke-opacity=".82"/>
</g>
<rect x="1026.0" y="30.0" width="129.0" height="131.0" fill="none" stroke="#8e8e8e" stroke-width="1"/>
<rect x="690.0" y="418.0" width="346.0" height="22.0" fill="url(#hd)"/>
<rect x="679.0" y="418.0" width="11.0" height="22.0" fill="#000"/>
<text x="790.7" y="434.3" font-size="11.7" textLength="23.5" lengthAdjust="spacingAndGlyphs" fill="#fff" stroke="#fff" stroke-width=".45">20%</text>
<text x="840.6" y="434.3" font-size="11.7" textLength="23.5" lengthAdjust="spacingAndGlyphs" fill="#fff" stroke="#fff" stroke-width=".45">40%</text>
<text x="890.4" y="434.3" font-size="11.7" textLength="23.5" lengthAdjust="spacingAndGlyphs" fill="#fff" stroke="#fff" stroke-width=".45">60%</text>
<text x="940.2" y="434.3" font-size="11.7" textLength="23.5" lengthAdjust="spacingAndGlyphs" fill="#fff" stroke="#fff" stroke-width=".45">80%</text>
<text x="990.3" y="434.3" font-size="11.7" textLength="30.6" lengthAdjust="spacingAndGlyphs" fill="#fff" stroke="#fff" stroke-width=".45">100%</text>
<rect x="690.0" y="439.8" width="346.0" height="20.3" fill="#404040"/>
<rect x="679.0" y="439.8" width="11.0" height="20.3" fill="url(#sel)"/>
<text x="694.1" y="454.8" font-size="12.8" textLength="47.6" lengthAdjust="spacingAndGlyphs" fill="#f4f4f4">x: CIE31</text>
<text x="790.7" y="454.8" font-size="12.8" textLength="24.6" lengthAdjust="spacingAndGlyphs" fill="#f4f4f4">0,29</text>
<text x="840.6" y="454.8" font-size="12.8" textLength="24.6" lengthAdjust="spacingAndGlyphs" fill="#f4f4f4">0,31</text>
<text x="890.4" y="454.8" font-size="12.8" textLength="24.6" lengthAdjust="spacingAndGlyphs" fill="#f4f4f4">0,33</text>
<text x="940.2" y="454.8" font-size="12.8" textLength="24.6" lengthAdjust="spacingAndGlyphs" fill="#f4f4f4">0,36</text>
<text x="990.3" y="454.8" font-size="12.8" textLength="24.6" lengthAdjust="spacingAndGlyphs" fill="#f4f4f4">0,39</text>
<rect x="690.0" y="459.9" width="346.0" height="20.3" fill="#838383"/>
<rect x="679.0" y="459.9" width="11.0" height="20.3" fill="url(#sel)"/>
<text x="694.1" y="474.9" font-size="12.8" textLength="47.6" lengthAdjust="spacingAndGlyphs" fill="#ececec">y: CIE31</text>
<text x="790.7" y="474.9" font-size="12.8" textLength="24.6" lengthAdjust="spacingAndGlyphs" fill="#ececec">0,30</text>
<text x="840.6" y="474.9" font-size="12.8" textLength="24.6" lengthAdjust="spacingAndGlyphs" fill="#ececec">0,34</text>
<text x="890.4" y="474.9" font-size="12.8" textLength="24.6" lengthAdjust="spacingAndGlyphs" fill="#ececec">0,37</text>
<text x="940.2" y="474.9" font-size="12.8" textLength="24.6" lengthAdjust="spacingAndGlyphs" fill="#ececec">0,42</text>
<text x="990.3" y="474.9" font-size="12.8" textLength="24.6" lengthAdjust="spacingAndGlyphs" fill="#ececec">0,48</text>
<rect x="690.0" y="480.1" width="346.0" height="20.3" fill="#404040"/>
<rect x="679.0" y="480.1" width="11.0" height="20.3" fill="url(#sel)"/>
<text x="694.1" y="495.1" font-size="12.8" textLength="7.8" lengthAdjust="spacingAndGlyphs" fill="#f4f4f4">Y</text>
<text x="791.3" y="495.1" font-size="12.8" textLength="39.6" lengthAdjust="spacingAndGlyphs" fill="#f4f4f4">118,90</text>
<text x="841.2" y="495.1" font-size="12.8" textLength="39.6" lengthAdjust="spacingAndGlyphs" fill="#f4f4f4">112,87</text>
<text x="891.0" y="495.1" font-size="12.8" textLength="39.6" lengthAdjust="spacingAndGlyphs" fill="#f4f4f4">108,02</text>
<text x="940.8" y="495.1" font-size="12.8" textLength="39.6" lengthAdjust="spacingAndGlyphs" fill="#f4f4f4">103,79</text>
<text x="990.9" y="495.1" font-size="12.8" textLength="39.6" lengthAdjust="spacingAndGlyphs" fill="#f4f4f4">100,49</text>
<rect x="690.0" y="500.2" width="346.0" height="20.3" fill="#838383"/>
<rect x="679.0" y="500.2" width="11.0" height="20.3" fill="url(#sel)"/>
<text x="694.1" y="515.2" font-size="12.8" textLength="88.0" lengthAdjust="spacingAndGlyphs" fill="#ececec">Target x:CIE31</text>
<text x="790.7" y="515.2" font-size="12.8" textLength="24.6" lengthAdjust="spacingAndGlyphs" fill="#ececec">0,33</text>
<text x="840.6" y="515.2" font-size="12.8" textLength="24.6" lengthAdjust="spacingAndGlyphs" fill="#ececec">0,36</text>
<text x="890.4" y="515.2" font-size="12.8" textLength="24.6" lengthAdjust="spacingAndGlyphs" fill="#ececec">0,38</text>
<text x="940.2" y="515.2" font-size="12.8" textLength="24.6" lengthAdjust="spacingAndGlyphs" fill="#ececec">0,40</text>
<text x="990.3" y="515.2" font-size="12.8" textLength="24.6" lengthAdjust="spacingAndGlyphs" fill="#ececec">0,42</text>
<rect x="690.0" y="520.4" width="346.0" height="20.3" fill="#404040"/>
<rect x="679.0" y="520.4" width="11.0" height="20.3" fill="url(#sel)"/>
<text x="694.1" y="535.4" font-size="12.8" textLength="88.0" lengthAdjust="spacingAndGlyphs" fill="#f4f4f4">Target y:CIE31</text>
<text x="790.7" y="535.4" font-size="12.8" textLength="24.6" lengthAdjust="spacingAndGlyphs" fill="#f4f4f4">0,36</text>
<text x="840.6" y="535.4" font-size="12.8" textLength="24.6" lengthAdjust="spacingAndGlyphs" fill="#f4f4f4">0,40</text>
<text x="890.4" y="535.4" font-size="12.8" textLength="24.6" lengthAdjust="spacingAndGlyphs" fill="#f4f4f4">0,44</text>
<text x="940.2" y="535.4" font-size="12.8" textLength="24.6" lengthAdjust="spacingAndGlyphs" fill="#f4f4f4">0,47</text>
<text x="990.3" y="535.4" font-size="12.8" textLength="24.6" lengthAdjust="spacingAndGlyphs" fill="#f4f4f4">0,51</text>
<rect x="690.0" y="540.5" width="346.0" height="20.3" fill="#838383"/>
<rect x="679.0" y="540.5" width="11.0" height="20.3" fill="url(#sel)"/>
<text x="694.1" y="555.5" font-size="12.8" textLength="50.5" lengthAdjust="spacingAndGlyphs" fill="#ececec">Target Y</text>
<text x="791.3" y="555.5" font-size="12.8" textLength="39.6" lengthAdjust="spacingAndGlyphs" fill="#ececec">121,21</text>
<text x="841.2" y="555.5" font-size="12.8" textLength="39.6" lengthAdjust="spacingAndGlyphs" fill="#ececec">119,08</text>
<text x="891.0" y="555.5" font-size="12.8" textLength="39.6" lengthAdjust="spacingAndGlyphs" fill="#ececec">117,45</text>
<text x="940.8" y="555.5" font-size="12.8" textLength="39.6" lengthAdjust="spacingAndGlyphs" fill="#ececec">116,16</text>
<text x="990.9" y="555.5" font-size="12.8" textLength="39.6" lengthAdjust="spacingAndGlyphs" fill="#ececec">114,92</text></svg></body></html>
